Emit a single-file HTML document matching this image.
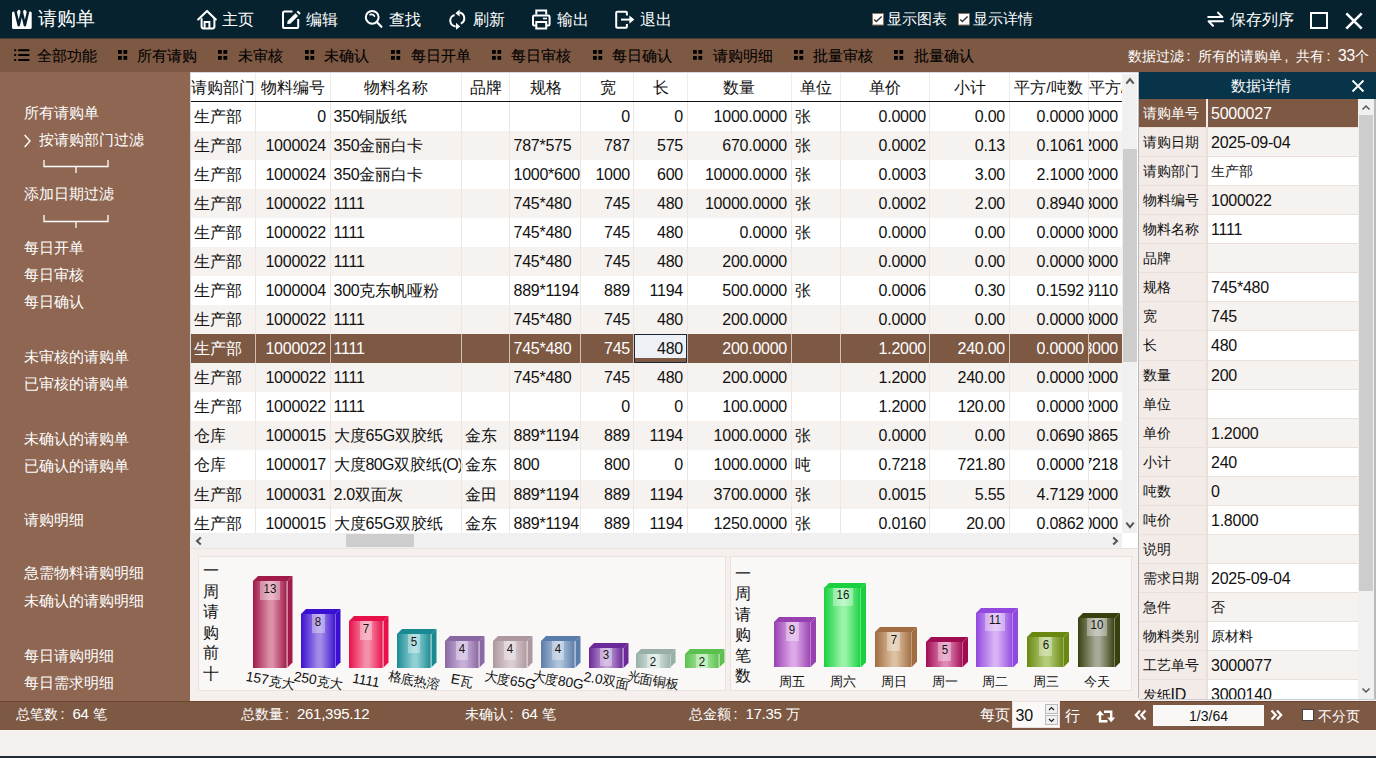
<!DOCTYPE html><html><head><meta charset="utf-8"><style>
*{box-sizing:border-box;margin:0;padding:0}
html,body{width:1376px;height:758px;overflow:hidden}
body{position:relative;background:#f5f1ee;font-family:"Liberation Sans",sans-serif;font-size:15px;color:#111}
.a{position:absolute}
.t{position:absolute;white-space:nowrap;line-height:1}
.n{font-size:16px;letter-spacing:-0.25px}
svg{position:absolute;overflow:visible}
.fc{display:inline-block;width:1em;padding-left:0.18em;font-size:1em}
</style></head><body>

<div class="a" style="left:0;top:0;width:1376px;height:38px;background:#05222e"></div>
<svg style="left:11px;top:8px" width="22" height="22" viewBox="0 0 22 22">
<rect x="1" y="3.6" width="19.7" height="17.4" rx="1.5" fill="#fff"/>
<path d="M6.6 2.8 Q7.9 0.9 9.2 2.8 L9 5 L6.8 5 Z" fill="#fff"/>
<path d="M12.4 2.8 Q13.7 0.9 15 2.8 L14.8 5 L12.6 5 Z" fill="#fff"/>
<path d="M4.3 2.6 L7.7 17.2 L10.8 4 L13.9 17.2 L17.3 2.6" fill="none" stroke="#05222e" stroke-width="2.5" stroke-linejoin="round"/>
</svg>
<div class="t" style="left:38px;top:10px;font-size:18.5px;color:#fff">请购单</div>
<svg style="left:196px;top:8px" width="22" height="22" viewBox="0 0 22 22">
<path d="M2.2 11.4 L11 2.9 L19.8 11.4" fill="none" stroke="#fff" stroke-width="2.1" stroke-linecap="round" stroke-linejoin="round"/>
<path d="M5.6 10.2 V18.6 Q5.6 20.4 7.4 20.4 H16.6 Q18.4 20.4 18.4 18.6 V10.2" fill="none" stroke="#fff" stroke-width="2"/>
<path d="M8.6 20 V13.9 H13.4 V20" fill="none" stroke="#fff" stroke-width="2"/>
</svg>
<div class="t" style="left:222px;top:11.5px;font-size:16px;color:#fff">主页</div>
<svg style="left:281px;top:9px" width="22" height="22" viewBox="0 0 22 22">
<path d="M11.5 2.4 H3.6 Q2 2.4 2 4 V17.4 Q2 19 3.6 19 H15.6 Q17.2 19 17.2 17.4 V10" fill="none" stroke="#fff" stroke-width="2"/>
<path d="M6.2 15.1 L6.6 12 L14.4 4.2 L17.1 6.9 L9.3 14.7 Z" fill="#fff"/>
<path d="M15.5 3.1 L16.6 2 Q17.1 1.6 17.6 2 L19.3 3.7 Q19.7 4.2 19.3 4.7 L18.2 5.8 Z" fill="#fff"/>
</svg>
<div class="t" style="left:305.5px;top:11.5px;font-size:16px;color:#fff">编辑</div>
<svg style="left:363px;top:8px" width="22" height="22" viewBox="0 0 22 22">
<circle cx="9.2" cy="9.3" r="6.4" fill="none" stroke="#fff" stroke-width="2"/>
<path d="M14 14.2 L18.4 18.8" stroke="#fff" stroke-width="2.2" stroke-linecap="round"/>
<path d="M7.2 6.6 Q10 5.6 11.4 8.2" fill="none" stroke="#fff" stroke-width="1.7" stroke-linecap="round"/>
</svg>
<div class="t" style="left:389px;top:11.5px;font-size:16px;color:#fff">查找</div>
<svg style="left:447px;top:8px" width="22" height="22" viewBox="0 0 22 22">
<path d="M12.6 4.6 A5.8 5.8 0 0 1 13.8 15.6" fill="none" stroke="#fff" stroke-width="2"/>
<path d="M8.6 18.4 A5.8 5.8 0 0 1 7.6 7" fill="none" stroke="#fff" stroke-width="2"/>
<path d="M12.6 1.6 L12.6 8.6 L8.4 5.2 Z" fill="#fff"/>
<path d="M9 14.8 L9 21.8 L13.2 18.4 Z" fill="#fff"/>
</svg>
<div class="t" style="left:473px;top:11.5px;font-size:16px;color:#fff">刷新</div>
<svg style="left:530px;top:8px" width="22" height="22" viewBox="0 0 22 22">
<path d="M6.3 6.6 V2.5 H16.2 V6.6" fill="none" stroke="#fff" stroke-width="2"/>
<path d="M6 17.4 H4.2 Q3 17.4 3 16.2 V9 Q3 7.6 4.4 7.6 H18.2 Q19.6 7.6 19.6 9 V16.2 Q19.6 17.4 18.4 17.4 H16.4" fill="none" stroke="#fff" stroke-width="2"/>
<path d="M6.3 13.9 H16.2 V20.6 H6.3 Z" fill="none" stroke="#fff" stroke-width="2"/>
<path d="M13 10.5 H17" stroke="#fff" stroke-width="1.6"/>
</svg>
<div class="t" style="left:557px;top:11.5px;font-size:16px;color:#fff">输出</div>
<svg style="left:613px;top:8px" width="22" height="22" viewBox="0 0 22 22">
<path d="M13.9 7.4 V4.8 Q13.9 3.8 12.9 3.8 H4.2 Q3.2 3.8 3.2 4.8 V18.8 Q3.2 19.8 4.2 19.8 H12.9 Q13.9 19.8 13.9 18.8 V16" fill="none" stroke="#fff" stroke-width="2"/>
<path d="M8 11.6 H17.5" stroke="#fff" stroke-width="2"/>
<path d="M16.4 7.4 L21.3 11.6 L16.4 15.8 Z" fill="#fff"/>
</svg>
<div class="t" style="left:640px;top:11.5px;font-size:16px;color:#fff">退出</div>
<svg style="left:872px;top:12.5px" width="12" height="12" viewBox="0 0 12 12"><rect x="0.5" y="0.5" width="11" height="11.5" fill="#fff" stroke="#8a7060" stroke-width="1"/><path d="M2.2 6.4 L4.4 8.6 L9.6 3.4" fill="none" stroke="#333" stroke-width="1.4"/></svg>
<div class="t" style="left:887px;top:12px;font-size:14.6px;color:#fff">显示图表</div>
<svg style="left:958px;top:12.5px" width="12" height="12" viewBox="0 0 12 12"><rect x="0.5" y="0.5" width="11" height="11.5" fill="#fff" stroke="#8a7060" stroke-width="1"/><path d="M2.2 6.4 L4.4 8.6 L9.6 3.4" fill="none" stroke="#333" stroke-width="1.4"/></svg>
<div class="t" style="left:972.5px;top:12px;font-size:14.6px;color:#fff">显示详情</div>
<svg style="left:1206px;top:10px" width="20" height="20" viewBox="0 0 20 20">
<path d="M2.2 7.1 H16.4 L12 2.6" fill="none" stroke="#fff" stroke-width="2" stroke-linecap="round" stroke-linejoin="round"/>
<path d="M17 11.3 H2.6 L7 15.8" fill="none" stroke="#fff" stroke-width="2" stroke-linecap="round" stroke-linejoin="round"/>
</svg>
<div class="t" style="left:1230px;top:12px;font-size:15.6px;color:#fff">保存列序</div>
<div class="a" style="left:1310px;top:12px;width:18px;height:17px;border:2px solid #fff"></div>
<svg style="left:1344px;top:11px" width="20" height="20" viewBox="0 0 20 20">
<path d="M2.3 2.3 L17.7 17.7 M17.7 2.3 L2.3 17.7" stroke="#fff" stroke-width="2.6"/></svg>
<div class="a" style="left:0;top:38px;width:1376px;height:34px;background:#7d5944"></div>
<div class="a" style="left:0;top:38px;width:1376px;height:1px;background:#4a3c34"></div>
<svg style="left:13px;top:48px" width="18" height="14" viewBox="0 0 18 14">
<rect x="1.2" y="1.2" width="2" height="2" fill="#000"/><rect x="5.2" y="1.2" width="11.2" height="2" fill="#000"/>
<rect x="1.2" y="6" width="2" height="2" fill="#000"/><rect x="5.2" y="6" width="11.2" height="2" fill="#000"/>
<rect x="1.2" y="11" width="2" height="2" fill="#000"/><rect x="5.2" y="11" width="11.2" height="2" fill="#000"/>
</svg>
<div class="t" style="left:36.5px;top:47.8px;font-size:15.3px;color:#000;-webkit-text-stroke:0.1px #000">全部功能</div>
<svg style="left:118px;top:50px" width="10" height="10" viewBox="0 0 10 10"><rect x="0" y="0" width="3.8" height="3.8" fill="#000"/><rect x="5.4" y="0" width="3.8" height="3.8" fill="#000"/><rect x="0" y="6" width="3.8" height="3.8" fill="#000"/><rect x="5.4" y="6" width="3.8" height="3.8" fill="#000"/></svg>
<div class="t" style="left:136.5px;top:47.8px;font-size:15.3px;color:#000;-webkit-text-stroke:0.1px #000">所有请购</div>
<svg style="left:218px;top:50px" width="10" height="10" viewBox="0 0 10 10"><rect x="0" y="0" width="3.8" height="3.8" fill="#000"/><rect x="5.4" y="0" width="3.8" height="3.8" fill="#000"/><rect x="0" y="6" width="3.8" height="3.8" fill="#000"/><rect x="5.4" y="6" width="3.8" height="3.8" fill="#000"/></svg>
<div class="t" style="left:237.5px;top:47.8px;font-size:15.3px;color:#000;-webkit-text-stroke:0.1px #000">未审核</div>
<svg style="left:305px;top:50px" width="10" height="10" viewBox="0 0 10 10"><rect x="0" y="0" width="3.8" height="3.8" fill="#000"/><rect x="5.4" y="0" width="3.8" height="3.8" fill="#000"/><rect x="0" y="6" width="3.8" height="3.8" fill="#000"/><rect x="5.4" y="6" width="3.8" height="3.8" fill="#000"/></svg>
<div class="t" style="left:324px;top:47.8px;font-size:15.3px;color:#000;-webkit-text-stroke:0.1px #000">未确认</div>
<svg style="left:391px;top:50px" width="10" height="10" viewBox="0 0 10 10"><rect x="0" y="0" width="3.8" height="3.8" fill="#000"/><rect x="5.4" y="0" width="3.8" height="3.8" fill="#000"/><rect x="0" y="6" width="3.8" height="3.8" fill="#000"/><rect x="5.4" y="6" width="3.8" height="3.8" fill="#000"/></svg>
<div class="t" style="left:410.5px;top:47.8px;font-size:15.3px;color:#000;-webkit-text-stroke:0.1px #000">每日开单</div>
<svg style="left:491.5px;top:50px" width="10" height="10" viewBox="0 0 10 10"><rect x="0" y="0" width="3.8" height="3.8" fill="#000"/><rect x="5.4" y="0" width="3.8" height="3.8" fill="#000"/><rect x="0" y="6" width="3.8" height="3.8" fill="#000"/><rect x="5.4" y="6" width="3.8" height="3.8" fill="#000"/></svg>
<div class="t" style="left:510.5px;top:47.8px;font-size:15.3px;color:#000;-webkit-text-stroke:0.1px #000">每日审核</div>
<svg style="left:592.5px;top:50px" width="10" height="10" viewBox="0 0 10 10"><rect x="0" y="0" width="3.8" height="3.8" fill="#000"/><rect x="5.4" y="0" width="3.8" height="3.8" fill="#000"/><rect x="0" y="6" width="3.8" height="3.8" fill="#000"/><rect x="5.4" y="6" width="3.8" height="3.8" fill="#000"/></svg>
<div class="t" style="left:611.5px;top:47.8px;font-size:15.3px;color:#000;-webkit-text-stroke:0.1px #000">每日确认</div>
<svg style="left:693px;top:50px" width="10" height="10" viewBox="0 0 10 10"><rect x="0" y="0" width="3.8" height="3.8" fill="#000"/><rect x="5.4" y="0" width="3.8" height="3.8" fill="#000"/><rect x="0" y="6" width="3.8" height="3.8" fill="#000"/><rect x="5.4" y="6" width="3.8" height="3.8" fill="#000"/></svg>
<div class="t" style="left:713px;top:47.8px;font-size:15.3px;color:#000;-webkit-text-stroke:0.1px #000">请购明细</div>
<svg style="left:794px;top:50px" width="10" height="10" viewBox="0 0 10 10"><rect x="0" y="0" width="3.8" height="3.8" fill="#000"/><rect x="5.4" y="0" width="3.8" height="3.8" fill="#000"/><rect x="0" y="6" width="3.8" height="3.8" fill="#000"/><rect x="5.4" y="6" width="3.8" height="3.8" fill="#000"/></svg>
<div class="t" style="left:813px;top:47.8px;font-size:15.3px;color:#000;-webkit-text-stroke:0.1px #000">批量审核</div>
<svg style="left:894px;top:50px" width="10" height="10" viewBox="0 0 10 10"><rect x="0" y="0" width="3.8" height="3.8" fill="#000"/><rect x="5.4" y="0" width="3.8" height="3.8" fill="#000"/><rect x="0" y="6" width="3.8" height="3.8" fill="#000"/><rect x="5.4" y="6" width="3.8" height="3.8" fill="#000"/></svg>
<div class="t" style="left:913.5px;top:47.8px;font-size:15.3px;color:#000;-webkit-text-stroke:0.1px #000">批量确认</div>
<div class="t" style="left:1128px;top:47.5px;font-size:14px;color:#fff">数据过滤<span class="fc">:</span>所有的请购单<span class="fc">,</span>共有<span class="fc">:</span><span class="n" style="font-size:15.6px">33</span>个</div>
<div class="a" style="left:0;top:72px;width:190px;height:629px;background:#8e6651"></div>
<div class="t" style="left:24px;top:105px;font-size:15.2px;color:#fff">所有请购单</div>
<div class="t" style="left:24px;top:132px;font-size:15.2px;color:#fff"><span style="display:inline-block;width:15px"></span>按请购部门过滤</div>
<div class="t" style="left:24px;top:186px;font-size:15.2px;color:#fff">添加日期过滤</div>
<div class="t" style="left:24px;top:240px;font-size:15.2px;color:#fff">每日开单</div>
<div class="t" style="left:24px;top:267px;font-size:15.2px;color:#fff">每日审核</div>
<div class="t" style="left:24px;top:294px;font-size:15.2px;color:#fff">每日确认</div>
<div class="t" style="left:24px;top:349px;font-size:15.2px;color:#fff">未审核的请购单</div>
<div class="t" style="left:24px;top:376px;font-size:15.2px;color:#fff">已审核的请购单</div>
<div class="t" style="left:24px;top:430.5px;font-size:15.2px;color:#fff">未确认的请购单</div>
<div class="t" style="left:24px;top:458px;font-size:15.2px;color:#fff">已确认的请购单</div>
<div class="t" style="left:24px;top:511.70000000000005px;font-size:15.2px;color:#fff">请购明细</div>
<div class="t" style="left:24px;top:565.3px;font-size:15.2px;color:#fff">急需物料请购明细</div>
<div class="t" style="left:24px;top:593px;font-size:15.2px;color:#fff">未确认的请购明细</div>
<div class="t" style="left:24px;top:647.7px;font-size:15.2px;color:#fff">每日请购明细</div>
<div class="t" style="left:24px;top:675px;font-size:15.2px;color:#fff">每日需求明细</div>
<svg style="left:43px;top:159.5px" width="66" height="14" viewBox="0 0 66 14"><path d="M1 0 V6.5 H65 V0 M33 6.5 V13" fill="none" stroke="#fff" stroke-width="1.3"/></svg>
<svg style="left:43px;top:215px" width="66" height="14" viewBox="0 0 66 14"><path d="M1 0 V6.5 H65 V0 M33 6.5 V13" fill="none" stroke="#fff" stroke-width="1.3"/></svg>
<svg style="left:23px;top:134px" width="9" height="14" viewBox="0 0 9 14"><path d="M1.6 1 L7 7 L1.6 13" fill="none" stroke="#fff" stroke-width="1.4"/></svg>
<div class="a" style="left:190px;top:72px;width:932px;height:461px;background:#fff;overflow:hidden">
<div class="a" style="left:0px;top:0;width:65px;height:29px;overflow:hidden"><div class="t" style="left:0;right:0;top:8.4px;text-align:center;font-size:15.5px">请购部门</div></div>
<div class="a" style="left:65px;top:0;width:75px;height:29px;overflow:hidden"><div class="t" style="left:0;right:0;top:8.4px;text-align:center;font-size:15.5px">物料编号</div></div>
<div class="a" style="left:65px;top:0;width:1px;height:29px;background:#ededed"></div>
<div class="a" style="left:140px;top:0;width:131px;height:29px;overflow:hidden"><div class="t" style="left:0;right:0;top:8.4px;text-align:center;font-size:15.5px">物料名称</div></div>
<div class="a" style="left:140px;top:0;width:1px;height:29px;background:#ededed"></div>
<div class="a" style="left:271px;top:0;width:49px;height:29px;overflow:hidden"><div class="t" style="left:0;right:0;top:8.4px;text-align:center;font-size:15.5px">品牌</div></div>
<div class="a" style="left:271px;top:0;width:1px;height:29px;background:#ededed"></div>
<div class="a" style="left:320px;top:0;width:71px;height:29px;overflow:hidden"><div class="t" style="left:0;right:0;top:8.4px;text-align:center;font-size:15.5px">规格</div></div>
<div class="a" style="left:319px;top:0;width:1px;height:29px;background:#ededed"></div>
<div class="a" style="left:391px;top:0;width:53px;height:29px;overflow:hidden"><div class="t" style="left:0;right:0;top:8.4px;text-align:center;font-size:15.5px">宽</div></div>
<div class="a" style="left:390px;top:0;width:1px;height:29px;background:#ededed"></div>
<div class="a" style="left:444px;top:0;width:53px;height:29px;overflow:hidden"><div class="t" style="left:0;right:0;top:8.4px;text-align:center;font-size:15.5px">长</div></div>
<div class="a" style="left:443px;top:0;width:1px;height:29px;background:#ededed"></div>
<div class="a" style="left:497px;top:0;width:104px;height:29px;overflow:hidden"><div class="t" style="left:0;right:0;top:8.4px;text-align:center;font-size:15.5px">数量</div></div>
<div class="a" style="left:497px;top:0;width:1px;height:29px;background:#ededed"></div>
<div class="a" style="left:601px;top:0;width:49px;height:29px;overflow:hidden"><div class="t" style="left:0;right:0;top:8.4px;text-align:center;font-size:15.5px">单位</div></div>
<div class="a" style="left:601px;top:0;width:1px;height:29px;background:#ededed"></div>
<div class="a" style="left:650px;top:0;width:90px;height:29px;overflow:hidden"><div class="t" style="left:0;right:0;top:8.4px;text-align:center;font-size:15.5px">单价</div></div>
<div class="a" style="left:650px;top:0;width:1px;height:29px;background:#ededed"></div>
<div class="a" style="left:740px;top:0;width:79px;height:29px;overflow:hidden"><div class="t" style="left:0;right:0;top:8.4px;text-align:center;font-size:15.5px">小计</div></div>
<div class="a" style="left:739px;top:0;width:1px;height:29px;background:#ededed"></div>
<div class="a" style="left:819px;top:0;width:79px;height:29px;overflow:hidden"><div class="t" style="left:0;right:0;top:8.4px;text-align:center;font-size:15.5px">平方/吨数</div></div>
<div class="a" style="left:819px;top:0;width:1px;height:29px;background:#ededed"></div>
<div class="a" style="left:898px;top:0;width:34px;height:29px;overflow:hidden"><div class="t" style="left:1px;top:8.4px;font-size:15.5px">平方/吨价</div></div>
<div class="a" style="left:898px;top:0;width:1px;height:29px;background:#ededed"></div>
<div class="a" style="left:0;top:0;width:1px;height:461px;background:#d6dbe3"></div>
<div class="a" style="left:1px;top:29px;width:931px;height:1px;background:#111"></div>
<div class="a" style="left:1px;top:30px;width:931px;height:30px;background:#fff"></div>
<div class="t" style="left:3.5px;top:37.2px;font-size:15.5px;color:#111">生产部</div>
<div class="a" style="left:65px;top:30px;width:1px;height:30px;background:#efe6e1"></div>
<div class="a" style="left:66px;top:30px;width:74px;height:29px;overflow:hidden"><div class="t" style="right:4px;top:7.2px;font-size:15.5px;color:#111"><span class="n">0</span></div></div>
<div class="a" style="left:140px;top:30px;width:1px;height:30px;background:#efe6e1"></div>
<div class="t" style="left:143.5px;top:37.2px;font-size:15.5px;color:#111"><span class="n">350</span>铜版纸</div>
<div class="a" style="left:271px;top:30px;width:1px;height:30px;background:#efe6e1"></div>
<div class="a" style="left:319px;top:30px;width:1px;height:30px;background:#efe6e1"></div>
<div class="a" style="left:390px;top:30px;width:1px;height:30px;background:#efe6e1"></div>
<div class="a" style="left:392px;top:30px;width:52px;height:29px;overflow:hidden"><div class="t" style="right:4px;top:7.2px;font-size:15.5px;color:#111"><span class="n">0</span></div></div>
<div class="a" style="left:443px;top:30px;width:1px;height:30px;background:#efe6e1"></div>
<div class="a" style="left:445px;top:30px;width:52px;height:29px;overflow:hidden"><div class="t" style="right:4px;top:7.2px;font-size:15.5px;color:#111"><span class="n">0</span></div></div>
<div class="a" style="left:497px;top:30px;width:1px;height:30px;background:#efe6e1"></div>
<div class="a" style="left:498px;top:30px;width:103px;height:29px;overflow:hidden"><div class="t" style="right:4px;top:7.2px;font-size:15.5px;color:#111"><span class="n">1000.0000</span></div></div>
<div class="a" style="left:601px;top:30px;width:1px;height:30px;background:#efe6e1"></div>
<div class="t" style="left:604.5px;top:37.2px;font-size:15.5px;color:#111">张</div>
<div class="a" style="left:650px;top:30px;width:1px;height:30px;background:#efe6e1"></div>
<div class="a" style="left:651px;top:30px;width:89px;height:29px;overflow:hidden"><div class="t" style="right:4px;top:7.2px;font-size:15.5px;color:#111"><span class="n">0.0000</span></div></div>
<div class="a" style="left:739px;top:30px;width:1px;height:30px;background:#efe6e1"></div>
<div class="a" style="left:741px;top:30px;width:78px;height:29px;overflow:hidden"><div class="t" style="right:4px;top:7.2px;font-size:15.5px;color:#111"><span class="n">0.00</span></div></div>
<div class="a" style="left:819px;top:30px;width:1px;height:30px;background:#efe6e1"></div>
<div class="a" style="left:820px;top:30px;width:78px;height:29px;overflow:hidden"><div class="t" style="right:4px;top:7.2px;font-size:15.5px;color:#111"><span class="n">0.0000</span></div></div>
<div class="a" style="left:898px;top:30px;width:1px;height:30px;background:#efe6e1"></div>
<div class="a" style="left:899px;top:30px;width:33px;height:29px;overflow:hidden"><div class="t" style="right:4px;top:7.2px;font-size:15.5px;color:#111"><span class="n">0.0000</span></div></div>
<div class="a" style="left:1px;top:59px;width:931px;height:30px;background:#f6f2ef"></div>
<div class="t" style="left:3.5px;top:66.2px;font-size:15.5px;color:#111">生产部</div>
<div class="a" style="left:65px;top:59px;width:1px;height:30px;background:#efe6e1"></div>
<div class="a" style="left:66px;top:59px;width:74px;height:29px;overflow:hidden"><div class="t" style="right:4px;top:7.2px;font-size:15.5px;color:#111"><span class="n">1000024</span></div></div>
<div class="a" style="left:140px;top:59px;width:1px;height:30px;background:#efe6e1"></div>
<div class="t" style="left:143.5px;top:66.2px;font-size:15.5px;color:#111"><span class="n">350</span>金丽白卡</div>
<div class="a" style="left:271px;top:59px;width:1px;height:30px;background:#efe6e1"></div>
<div class="a" style="left:319px;top:59px;width:1px;height:30px;background:#efe6e1"></div>
<div class="t" style="left:323.5px;top:66.2px;font-size:15.5px;color:#111"><span class="n">787*575</span></div>
<div class="a" style="left:390px;top:59px;width:1px;height:30px;background:#efe6e1"></div>
<div class="a" style="left:392px;top:59px;width:52px;height:29px;overflow:hidden"><div class="t" style="right:4px;top:7.2px;font-size:15.5px;color:#111"><span class="n">787</span></div></div>
<div class="a" style="left:443px;top:59px;width:1px;height:30px;background:#efe6e1"></div>
<div class="a" style="left:445px;top:59px;width:52px;height:29px;overflow:hidden"><div class="t" style="right:4px;top:7.2px;font-size:15.5px;color:#111"><span class="n">575</span></div></div>
<div class="a" style="left:497px;top:59px;width:1px;height:30px;background:#efe6e1"></div>
<div class="a" style="left:498px;top:59px;width:103px;height:29px;overflow:hidden"><div class="t" style="right:4px;top:7.2px;font-size:15.5px;color:#111"><span class="n">670.0000</span></div></div>
<div class="a" style="left:601px;top:59px;width:1px;height:30px;background:#efe6e1"></div>
<div class="t" style="left:604.5px;top:66.2px;font-size:15.5px;color:#111">张</div>
<div class="a" style="left:650px;top:59px;width:1px;height:30px;background:#efe6e1"></div>
<div class="a" style="left:651px;top:59px;width:89px;height:29px;overflow:hidden"><div class="t" style="right:4px;top:7.2px;font-size:15.5px;color:#111"><span class="n">0.0002</span></div></div>
<div class="a" style="left:739px;top:59px;width:1px;height:30px;background:#efe6e1"></div>
<div class="a" style="left:741px;top:59px;width:78px;height:29px;overflow:hidden"><div class="t" style="right:4px;top:7.2px;font-size:15.5px;color:#111"><span class="n">0.13</span></div></div>
<div class="a" style="left:819px;top:59px;width:1px;height:30px;background:#efe6e1"></div>
<div class="a" style="left:820px;top:59px;width:78px;height:29px;overflow:hidden"><div class="t" style="right:4px;top:7.2px;font-size:15.5px;color:#111"><span class="n">0.1061</span></div></div>
<div class="a" style="left:898px;top:59px;width:1px;height:30px;background:#efe6e1"></div>
<div class="a" style="left:899px;top:59px;width:33px;height:29px;overflow:hidden"><div class="t" style="right:4px;top:7.2px;font-size:15.5px;color:#111"><span class="n">0.2000</span></div></div>
<div class="a" style="left:1px;top:88px;width:931px;height:30px;background:#fff"></div>
<div class="t" style="left:3.5px;top:95.2px;font-size:15.5px;color:#111">生产部</div>
<div class="a" style="left:65px;top:88px;width:1px;height:30px;background:#efe6e1"></div>
<div class="a" style="left:66px;top:88px;width:74px;height:29px;overflow:hidden"><div class="t" style="right:4px;top:7.2px;font-size:15.5px;color:#111"><span class="n">1000024</span></div></div>
<div class="a" style="left:140px;top:88px;width:1px;height:30px;background:#efe6e1"></div>
<div class="t" style="left:143.5px;top:95.2px;font-size:15.5px;color:#111"><span class="n">350</span>金丽白卡</div>
<div class="a" style="left:271px;top:88px;width:1px;height:30px;background:#efe6e1"></div>
<div class="a" style="left:319px;top:88px;width:1px;height:30px;background:#efe6e1"></div>
<div class="t" style="left:323.5px;top:95.2px;font-size:15.5px;color:#111"><span class="n">1000*600</span></div>
<div class="a" style="left:390px;top:88px;width:1px;height:30px;background:#efe6e1"></div>
<div class="a" style="left:392px;top:88px;width:52px;height:29px;overflow:hidden"><div class="t" style="right:4px;top:7.2px;font-size:15.5px;color:#111"><span class="n">1000</span></div></div>
<div class="a" style="left:443px;top:88px;width:1px;height:30px;background:#efe6e1"></div>
<div class="a" style="left:445px;top:88px;width:52px;height:29px;overflow:hidden"><div class="t" style="right:4px;top:7.2px;font-size:15.5px;color:#111"><span class="n">600</span></div></div>
<div class="a" style="left:497px;top:88px;width:1px;height:30px;background:#efe6e1"></div>
<div class="a" style="left:498px;top:88px;width:103px;height:29px;overflow:hidden"><div class="t" style="right:4px;top:7.2px;font-size:15.5px;color:#111"><span class="n">10000.0000</span></div></div>
<div class="a" style="left:601px;top:88px;width:1px;height:30px;background:#efe6e1"></div>
<div class="t" style="left:604.5px;top:95.2px;font-size:15.5px;color:#111">张</div>
<div class="a" style="left:650px;top:88px;width:1px;height:30px;background:#efe6e1"></div>
<div class="a" style="left:651px;top:88px;width:89px;height:29px;overflow:hidden"><div class="t" style="right:4px;top:7.2px;font-size:15.5px;color:#111"><span class="n">0.0003</span></div></div>
<div class="a" style="left:739px;top:88px;width:1px;height:30px;background:#efe6e1"></div>
<div class="a" style="left:741px;top:88px;width:78px;height:29px;overflow:hidden"><div class="t" style="right:4px;top:7.2px;font-size:15.5px;color:#111"><span class="n">3.00</span></div></div>
<div class="a" style="left:819px;top:88px;width:1px;height:30px;background:#efe6e1"></div>
<div class="a" style="left:820px;top:88px;width:78px;height:29px;overflow:hidden"><div class="t" style="right:4px;top:7.2px;font-size:15.5px;color:#111"><span class="n">2.1000</span></div></div>
<div class="a" style="left:898px;top:88px;width:1px;height:30px;background:#efe6e1"></div>
<div class="a" style="left:899px;top:88px;width:33px;height:29px;overflow:hidden"><div class="t" style="right:4px;top:7.2px;font-size:15.5px;color:#111"><span class="n">0.2000</span></div></div>
<div class="a" style="left:1px;top:117px;width:931px;height:30px;background:#f6f2ef"></div>
<div class="t" style="left:3.5px;top:124.2px;font-size:15.5px;color:#111">生产部</div>
<div class="a" style="left:65px;top:117px;width:1px;height:30px;background:#efe6e1"></div>
<div class="a" style="left:66px;top:117px;width:74px;height:29px;overflow:hidden"><div class="t" style="right:4px;top:7.2px;font-size:15.5px;color:#111"><span class="n">1000022</span></div></div>
<div class="a" style="left:140px;top:117px;width:1px;height:30px;background:#efe6e1"></div>
<div class="t" style="left:143.5px;top:124.2px;font-size:15.5px;color:#111"><span class="n">1111</span></div>
<div class="a" style="left:271px;top:117px;width:1px;height:30px;background:#efe6e1"></div>
<div class="a" style="left:319px;top:117px;width:1px;height:30px;background:#efe6e1"></div>
<div class="t" style="left:323.5px;top:124.2px;font-size:15.5px;color:#111"><span class="n">745*480</span></div>
<div class="a" style="left:390px;top:117px;width:1px;height:30px;background:#efe6e1"></div>
<div class="a" style="left:392px;top:117px;width:52px;height:29px;overflow:hidden"><div class="t" style="right:4px;top:7.2px;font-size:15.5px;color:#111"><span class="n">745</span></div></div>
<div class="a" style="left:443px;top:117px;width:1px;height:30px;background:#efe6e1"></div>
<div class="a" style="left:445px;top:117px;width:52px;height:29px;overflow:hidden"><div class="t" style="right:4px;top:7.2px;font-size:15.5px;color:#111"><span class="n">480</span></div></div>
<div class="a" style="left:497px;top:117px;width:1px;height:30px;background:#efe6e1"></div>
<div class="a" style="left:498px;top:117px;width:103px;height:29px;overflow:hidden"><div class="t" style="right:4px;top:7.2px;font-size:15.5px;color:#111"><span class="n">10000.0000</span></div></div>
<div class="a" style="left:601px;top:117px;width:1px;height:30px;background:#efe6e1"></div>
<div class="t" style="left:604.5px;top:124.2px;font-size:15.5px;color:#111">张</div>
<div class="a" style="left:650px;top:117px;width:1px;height:30px;background:#efe6e1"></div>
<div class="a" style="left:651px;top:117px;width:89px;height:29px;overflow:hidden"><div class="t" style="right:4px;top:7.2px;font-size:15.5px;color:#111"><span class="n">0.0002</span></div></div>
<div class="a" style="left:739px;top:117px;width:1px;height:30px;background:#efe6e1"></div>
<div class="a" style="left:741px;top:117px;width:78px;height:29px;overflow:hidden"><div class="t" style="right:4px;top:7.2px;font-size:15.5px;color:#111"><span class="n">2.00</span></div></div>
<div class="a" style="left:819px;top:117px;width:1px;height:30px;background:#efe6e1"></div>
<div class="a" style="left:820px;top:117px;width:78px;height:29px;overflow:hidden"><div class="t" style="right:4px;top:7.2px;font-size:15.5px;color:#111"><span class="n">0.8940</span></div></div>
<div class="a" style="left:898px;top:117px;width:1px;height:30px;background:#efe6e1"></div>
<div class="a" style="left:899px;top:117px;width:33px;height:29px;overflow:hidden"><div class="t" style="right:4px;top:7.2px;font-size:15.5px;color:#111"><span class="n">1.3000</span></div></div>
<div class="a" style="left:1px;top:146px;width:931px;height:30px;background:#fff"></div>
<div class="t" style="left:3.5px;top:153.2px;font-size:15.5px;color:#111">生产部</div>
<div class="a" style="left:65px;top:146px;width:1px;height:30px;background:#efe6e1"></div>
<div class="a" style="left:66px;top:146px;width:74px;height:29px;overflow:hidden"><div class="t" style="right:4px;top:7.2px;font-size:15.5px;color:#111"><span class="n">1000022</span></div></div>
<div class="a" style="left:140px;top:146px;width:1px;height:30px;background:#efe6e1"></div>
<div class="t" style="left:143.5px;top:153.2px;font-size:15.5px;color:#111"><span class="n">1111</span></div>
<div class="a" style="left:271px;top:146px;width:1px;height:30px;background:#efe6e1"></div>
<div class="a" style="left:319px;top:146px;width:1px;height:30px;background:#efe6e1"></div>
<div class="t" style="left:323.5px;top:153.2px;font-size:15.5px;color:#111"><span class="n">745*480</span></div>
<div class="a" style="left:390px;top:146px;width:1px;height:30px;background:#efe6e1"></div>
<div class="a" style="left:392px;top:146px;width:52px;height:29px;overflow:hidden"><div class="t" style="right:4px;top:7.2px;font-size:15.5px;color:#111"><span class="n">745</span></div></div>
<div class="a" style="left:443px;top:146px;width:1px;height:30px;background:#efe6e1"></div>
<div class="a" style="left:445px;top:146px;width:52px;height:29px;overflow:hidden"><div class="t" style="right:4px;top:7.2px;font-size:15.5px;color:#111"><span class="n">480</span></div></div>
<div class="a" style="left:497px;top:146px;width:1px;height:30px;background:#efe6e1"></div>
<div class="a" style="left:498px;top:146px;width:103px;height:29px;overflow:hidden"><div class="t" style="right:4px;top:7.2px;font-size:15.5px;color:#111"><span class="n">0.0000</span></div></div>
<div class="a" style="left:601px;top:146px;width:1px;height:30px;background:#efe6e1"></div>
<div class="t" style="left:604.5px;top:153.2px;font-size:15.5px;color:#111">张</div>
<div class="a" style="left:650px;top:146px;width:1px;height:30px;background:#efe6e1"></div>
<div class="a" style="left:651px;top:146px;width:89px;height:29px;overflow:hidden"><div class="t" style="right:4px;top:7.2px;font-size:15.5px;color:#111"><span class="n">0.0000</span></div></div>
<div class="a" style="left:739px;top:146px;width:1px;height:30px;background:#efe6e1"></div>
<div class="a" style="left:741px;top:146px;width:78px;height:29px;overflow:hidden"><div class="t" style="right:4px;top:7.2px;font-size:15.5px;color:#111"><span class="n">0.00</span></div></div>
<div class="a" style="left:819px;top:146px;width:1px;height:30px;background:#efe6e1"></div>
<div class="a" style="left:820px;top:146px;width:78px;height:29px;overflow:hidden"><div class="t" style="right:4px;top:7.2px;font-size:15.5px;color:#111"><span class="n">0.0000</span></div></div>
<div class="a" style="left:898px;top:146px;width:1px;height:30px;background:#efe6e1"></div>
<div class="a" style="left:899px;top:146px;width:33px;height:29px;overflow:hidden"><div class="t" style="right:4px;top:7.2px;font-size:15.5px;color:#111"><span class="n">1.3000</span></div></div>
<div class="a" style="left:1px;top:175px;width:931px;height:30px;background:#f6f2ef"></div>
<div class="t" style="left:3.5px;top:182.2px;font-size:15.5px;color:#111">生产部</div>
<div class="a" style="left:65px;top:175px;width:1px;height:30px;background:#efe6e1"></div>
<div class="a" style="left:66px;top:175px;width:74px;height:29px;overflow:hidden"><div class="t" style="right:4px;top:7.2px;font-size:15.5px;color:#111"><span class="n">1000022</span></div></div>
<div class="a" style="left:140px;top:175px;width:1px;height:30px;background:#efe6e1"></div>
<div class="t" style="left:143.5px;top:182.2px;font-size:15.5px;color:#111"><span class="n">1111</span></div>
<div class="a" style="left:271px;top:175px;width:1px;height:30px;background:#efe6e1"></div>
<div class="a" style="left:319px;top:175px;width:1px;height:30px;background:#efe6e1"></div>
<div class="t" style="left:323.5px;top:182.2px;font-size:15.5px;color:#111"><span class="n">745*480</span></div>
<div class="a" style="left:390px;top:175px;width:1px;height:30px;background:#efe6e1"></div>
<div class="a" style="left:392px;top:175px;width:52px;height:29px;overflow:hidden"><div class="t" style="right:4px;top:7.2px;font-size:15.5px;color:#111"><span class="n">745</span></div></div>
<div class="a" style="left:443px;top:175px;width:1px;height:30px;background:#efe6e1"></div>
<div class="a" style="left:445px;top:175px;width:52px;height:29px;overflow:hidden"><div class="t" style="right:4px;top:7.2px;font-size:15.5px;color:#111"><span class="n">480</span></div></div>
<div class="a" style="left:497px;top:175px;width:1px;height:30px;background:#efe6e1"></div>
<div class="a" style="left:498px;top:175px;width:103px;height:29px;overflow:hidden"><div class="t" style="right:4px;top:7.2px;font-size:15.5px;color:#111"><span class="n">200.0000</span></div></div>
<div class="a" style="left:601px;top:175px;width:1px;height:30px;background:#efe6e1"></div>
<div class="a" style="left:650px;top:175px;width:1px;height:30px;background:#efe6e1"></div>
<div class="a" style="left:651px;top:175px;width:89px;height:29px;overflow:hidden"><div class="t" style="right:4px;top:7.2px;font-size:15.5px;color:#111"><span class="n">0.0000</span></div></div>
<div class="a" style="left:739px;top:175px;width:1px;height:30px;background:#efe6e1"></div>
<div class="a" style="left:741px;top:175px;width:78px;height:29px;overflow:hidden"><div class="t" style="right:4px;top:7.2px;font-size:15.5px;color:#111"><span class="n">0.00</span></div></div>
<div class="a" style="left:819px;top:175px;width:1px;height:30px;background:#efe6e1"></div>
<div class="a" style="left:820px;top:175px;width:78px;height:29px;overflow:hidden"><div class="t" style="right:4px;top:7.2px;font-size:15.5px;color:#111"><span class="n">0.0000</span></div></div>
<div class="a" style="left:898px;top:175px;width:1px;height:30px;background:#efe6e1"></div>
<div class="a" style="left:899px;top:175px;width:33px;height:29px;overflow:hidden"><div class="t" style="right:4px;top:7.2px;font-size:15.5px;color:#111"><span class="n">1.3000</span></div></div>
<div class="a" style="left:1px;top:204px;width:931px;height:30px;background:#fff"></div>
<div class="t" style="left:3.5px;top:211.2px;font-size:15.5px;color:#111">生产部</div>
<div class="a" style="left:65px;top:204px;width:1px;height:30px;background:#efe6e1"></div>
<div class="a" style="left:66px;top:204px;width:74px;height:29px;overflow:hidden"><div class="t" style="right:4px;top:7.2px;font-size:15.5px;color:#111"><span class="n">1000004</span></div></div>
<div class="a" style="left:140px;top:204px;width:1px;height:30px;background:#efe6e1"></div>
<div class="t" style="left:143.5px;top:211.2px;font-size:15.5px;color:#111"><span class="n">300</span>克东帆哑粉</div>
<div class="a" style="left:271px;top:204px;width:1px;height:30px;background:#efe6e1"></div>
<div class="a" style="left:319px;top:204px;width:1px;height:30px;background:#efe6e1"></div>
<div class="t" style="left:323.5px;top:211.2px;font-size:15.5px;color:#111"><span class="n">889*1194</span></div>
<div class="a" style="left:390px;top:204px;width:1px;height:30px;background:#efe6e1"></div>
<div class="a" style="left:392px;top:204px;width:52px;height:29px;overflow:hidden"><div class="t" style="right:4px;top:7.2px;font-size:15.5px;color:#111"><span class="n">889</span></div></div>
<div class="a" style="left:443px;top:204px;width:1px;height:30px;background:#efe6e1"></div>
<div class="a" style="left:445px;top:204px;width:52px;height:29px;overflow:hidden"><div class="t" style="right:4px;top:7.2px;font-size:15.5px;color:#111"><span class="n">1194</span></div></div>
<div class="a" style="left:497px;top:204px;width:1px;height:30px;background:#efe6e1"></div>
<div class="a" style="left:498px;top:204px;width:103px;height:29px;overflow:hidden"><div class="t" style="right:4px;top:7.2px;font-size:15.5px;color:#111"><span class="n">500.0000</span></div></div>
<div class="a" style="left:601px;top:204px;width:1px;height:30px;background:#efe6e1"></div>
<div class="t" style="left:604.5px;top:211.2px;font-size:15.5px;color:#111">张</div>
<div class="a" style="left:650px;top:204px;width:1px;height:30px;background:#efe6e1"></div>
<div class="a" style="left:651px;top:204px;width:89px;height:29px;overflow:hidden"><div class="t" style="right:4px;top:7.2px;font-size:15.5px;color:#111"><span class="n">0.0006</span></div></div>
<div class="a" style="left:739px;top:204px;width:1px;height:30px;background:#efe6e1"></div>
<div class="a" style="left:741px;top:204px;width:78px;height:29px;overflow:hidden"><div class="t" style="right:4px;top:7.2px;font-size:15.5px;color:#111"><span class="n">0.30</span></div></div>
<div class="a" style="left:819px;top:204px;width:1px;height:30px;background:#efe6e1"></div>
<div class="a" style="left:820px;top:204px;width:78px;height:29px;overflow:hidden"><div class="t" style="right:4px;top:7.2px;font-size:15.5px;color:#111"><span class="n">0.1592</span></div></div>
<div class="a" style="left:898px;top:204px;width:1px;height:30px;background:#efe6e1"></div>
<div class="a" style="left:899px;top:204px;width:33px;height:29px;overflow:hidden"><div class="t" style="right:4px;top:7.2px;font-size:15.5px;color:#111"><span class="n">3.9110</span></div></div>
<div class="a" style="left:1px;top:233px;width:931px;height:30px;background:#f6f2ef"></div>
<div class="t" style="left:3.5px;top:240.2px;font-size:15.5px;color:#111">生产部</div>
<div class="a" style="left:65px;top:233px;width:1px;height:30px;background:#efe6e1"></div>
<div class="a" style="left:66px;top:233px;width:74px;height:29px;overflow:hidden"><div class="t" style="right:4px;top:7.2px;font-size:15.5px;color:#111"><span class="n">1000022</span></div></div>
<div class="a" style="left:140px;top:233px;width:1px;height:30px;background:#efe6e1"></div>
<div class="t" style="left:143.5px;top:240.2px;font-size:15.5px;color:#111"><span class="n">1111</span></div>
<div class="a" style="left:271px;top:233px;width:1px;height:30px;background:#efe6e1"></div>
<div class="a" style="left:319px;top:233px;width:1px;height:30px;background:#efe6e1"></div>
<div class="t" style="left:323.5px;top:240.2px;font-size:15.5px;color:#111"><span class="n">745*480</span></div>
<div class="a" style="left:390px;top:233px;width:1px;height:30px;background:#efe6e1"></div>
<div class="a" style="left:392px;top:233px;width:52px;height:29px;overflow:hidden"><div class="t" style="right:4px;top:7.2px;font-size:15.5px;color:#111"><span class="n">745</span></div></div>
<div class="a" style="left:443px;top:233px;width:1px;height:30px;background:#efe6e1"></div>
<div class="a" style="left:445px;top:233px;width:52px;height:29px;overflow:hidden"><div class="t" style="right:4px;top:7.2px;font-size:15.5px;color:#111"><span class="n">480</span></div></div>
<div class="a" style="left:497px;top:233px;width:1px;height:30px;background:#efe6e1"></div>
<div class="a" style="left:498px;top:233px;width:103px;height:29px;overflow:hidden"><div class="t" style="right:4px;top:7.2px;font-size:15.5px;color:#111"><span class="n">200.0000</span></div></div>
<div class="a" style="left:601px;top:233px;width:1px;height:30px;background:#efe6e1"></div>
<div class="a" style="left:650px;top:233px;width:1px;height:30px;background:#efe6e1"></div>
<div class="a" style="left:651px;top:233px;width:89px;height:29px;overflow:hidden"><div class="t" style="right:4px;top:7.2px;font-size:15.5px;color:#111"><span class="n">0.0000</span></div></div>
<div class="a" style="left:739px;top:233px;width:1px;height:30px;background:#efe6e1"></div>
<div class="a" style="left:741px;top:233px;width:78px;height:29px;overflow:hidden"><div class="t" style="right:4px;top:7.2px;font-size:15.5px;color:#111"><span class="n">0.00</span></div></div>
<div class="a" style="left:819px;top:233px;width:1px;height:30px;background:#efe6e1"></div>
<div class="a" style="left:820px;top:233px;width:78px;height:29px;overflow:hidden"><div class="t" style="right:4px;top:7.2px;font-size:15.5px;color:#111"><span class="n">0.0000</span></div></div>
<div class="a" style="left:898px;top:233px;width:1px;height:30px;background:#efe6e1"></div>
<div class="a" style="left:899px;top:233px;width:33px;height:29px;overflow:hidden"><div class="t" style="right:4px;top:7.2px;font-size:15.5px;color:#111"><span class="n">1.3000</span></div></div>
<div class="a" style="left:1px;top:262px;width:931px;height:30px;background:#7d5944"></div>
<div class="t" style="left:3.5px;top:269.2px;font-size:15.5px;color:#fff">生产部</div>
<div class="a" style="left:65px;top:262px;width:1px;height:30px;background:#d2beb2"></div>
<div class="a" style="left:66px;top:262px;width:74px;height:29px;overflow:hidden"><div class="t" style="right:4px;top:7.2px;font-size:15.5px;color:#fff"><span class="n">1000022</span></div></div>
<div class="a" style="left:140px;top:262px;width:1px;height:30px;background:#d2beb2"></div>
<div class="t" style="left:143.5px;top:269.2px;font-size:15.5px;color:#fff"><span class="n">1111</span></div>
<div class="a" style="left:271px;top:262px;width:1px;height:30px;background:#d2beb2"></div>
<div class="a" style="left:319px;top:262px;width:1px;height:30px;background:#d2beb2"></div>
<div class="t" style="left:323.5px;top:269.2px;font-size:15.5px;color:#fff"><span class="n">745*480</span></div>
<div class="a" style="left:390px;top:262px;width:1px;height:30px;background:#d2beb2"></div>
<div class="a" style="left:392px;top:262px;width:52px;height:29px;overflow:hidden"><div class="t" style="right:4px;top:7.2px;font-size:15.5px;color:#fff"><span class="n">745</span></div></div>
<div class="a" style="left:443px;top:262px;width:1px;height:30px;background:#d2beb2"></div>
<div class="a" style="left:444px;top:262px;width:53px;height:29px;border:1px solid #1c2833;background:linear-gradient(#edf1f6 0,#edf1f6 84%,#7d5944 84%)"></div>
<div class="a" style="left:445px;top:262px;width:52px;height:29px;overflow:hidden"><div class="t" style="right:4px;top:7.2px;font-size:15.5px;color:#111"><span class="n">480</span></div></div>
<div class="a" style="left:497px;top:262px;width:1px;height:30px;background:#d2beb2"></div>
<div class="a" style="left:498px;top:262px;width:103px;height:29px;overflow:hidden"><div class="t" style="right:4px;top:7.2px;font-size:15.5px;color:#fff"><span class="n">200.0000</span></div></div>
<div class="a" style="left:601px;top:262px;width:1px;height:30px;background:#d2beb2"></div>
<div class="a" style="left:650px;top:262px;width:1px;height:30px;background:#d2beb2"></div>
<div class="a" style="left:651px;top:262px;width:89px;height:29px;overflow:hidden"><div class="t" style="right:4px;top:7.2px;font-size:15.5px;color:#fff"><span class="n">1.2000</span></div></div>
<div class="a" style="left:739px;top:262px;width:1px;height:30px;background:#d2beb2"></div>
<div class="a" style="left:741px;top:262px;width:78px;height:29px;overflow:hidden"><div class="t" style="right:4px;top:7.2px;font-size:15.5px;color:#fff"><span class="n">240.00</span></div></div>
<div class="a" style="left:819px;top:262px;width:1px;height:30px;background:#d2beb2"></div>
<div class="a" style="left:820px;top:262px;width:78px;height:29px;overflow:hidden"><div class="t" style="right:4px;top:7.2px;font-size:15.5px;color:#fff"><span class="n">0.0000</span></div></div>
<div class="a" style="left:898px;top:262px;width:1px;height:30px;background:#d2beb2"></div>
<div class="a" style="left:899px;top:262px;width:33px;height:29px;overflow:hidden"><div class="t" style="right:4px;top:7.2px;font-size:15.5px;color:#fff"><span class="n">1.3000</span></div></div>
<div class="a" style="left:1px;top:291px;width:931px;height:30px;background:#f6f2ef"></div>
<div class="t" style="left:3.5px;top:298.2px;font-size:15.5px;color:#111">生产部</div>
<div class="a" style="left:65px;top:291px;width:1px;height:30px;background:#efe6e1"></div>
<div class="a" style="left:66px;top:291px;width:74px;height:29px;overflow:hidden"><div class="t" style="right:4px;top:7.2px;font-size:15.5px;color:#111"><span class="n">1000022</span></div></div>
<div class="a" style="left:140px;top:291px;width:1px;height:30px;background:#efe6e1"></div>
<div class="t" style="left:143.5px;top:298.2px;font-size:15.5px;color:#111"><span class="n">1111</span></div>
<div class="a" style="left:271px;top:291px;width:1px;height:30px;background:#efe6e1"></div>
<div class="a" style="left:319px;top:291px;width:1px;height:30px;background:#efe6e1"></div>
<div class="t" style="left:323.5px;top:298.2px;font-size:15.5px;color:#111"><span class="n">745*480</span></div>
<div class="a" style="left:390px;top:291px;width:1px;height:30px;background:#efe6e1"></div>
<div class="a" style="left:392px;top:291px;width:52px;height:29px;overflow:hidden"><div class="t" style="right:4px;top:7.2px;font-size:15.5px;color:#111"><span class="n">745</span></div></div>
<div class="a" style="left:443px;top:291px;width:1px;height:30px;background:#efe6e1"></div>
<div class="a" style="left:445px;top:291px;width:52px;height:29px;overflow:hidden"><div class="t" style="right:4px;top:7.2px;font-size:15.5px;color:#111"><span class="n">480</span></div></div>
<div class="a" style="left:497px;top:291px;width:1px;height:30px;background:#efe6e1"></div>
<div class="a" style="left:498px;top:291px;width:103px;height:29px;overflow:hidden"><div class="t" style="right:4px;top:7.2px;font-size:15.5px;color:#111"><span class="n">200.0000</span></div></div>
<div class="a" style="left:601px;top:291px;width:1px;height:30px;background:#efe6e1"></div>
<div class="a" style="left:650px;top:291px;width:1px;height:30px;background:#efe6e1"></div>
<div class="a" style="left:651px;top:291px;width:89px;height:29px;overflow:hidden"><div class="t" style="right:4px;top:7.2px;font-size:15.5px;color:#111"><span class="n">1.2000</span></div></div>
<div class="a" style="left:739px;top:291px;width:1px;height:30px;background:#efe6e1"></div>
<div class="a" style="left:741px;top:291px;width:78px;height:29px;overflow:hidden"><div class="t" style="right:4px;top:7.2px;font-size:15.5px;color:#111"><span class="n">240.00</span></div></div>
<div class="a" style="left:819px;top:291px;width:1px;height:30px;background:#efe6e1"></div>
<div class="a" style="left:820px;top:291px;width:78px;height:29px;overflow:hidden"><div class="t" style="right:4px;top:7.2px;font-size:15.5px;color:#111"><span class="n">0.0000</span></div></div>
<div class="a" style="left:898px;top:291px;width:1px;height:30px;background:#efe6e1"></div>
<div class="a" style="left:899px;top:291px;width:33px;height:29px;overflow:hidden"><div class="t" style="right:4px;top:7.2px;font-size:15.5px;color:#111"><span class="n">1.2000</span></div></div>
<div class="a" style="left:1px;top:320px;width:931px;height:30px;background:#fff"></div>
<div class="t" style="left:3.5px;top:327.2px;font-size:15.5px;color:#111">生产部</div>
<div class="a" style="left:65px;top:320px;width:1px;height:30px;background:#efe6e1"></div>
<div class="a" style="left:66px;top:320px;width:74px;height:29px;overflow:hidden"><div class="t" style="right:4px;top:7.2px;font-size:15.5px;color:#111"><span class="n">1000022</span></div></div>
<div class="a" style="left:140px;top:320px;width:1px;height:30px;background:#efe6e1"></div>
<div class="t" style="left:143.5px;top:327.2px;font-size:15.5px;color:#111"><span class="n">1111</span></div>
<div class="a" style="left:271px;top:320px;width:1px;height:30px;background:#efe6e1"></div>
<div class="a" style="left:319px;top:320px;width:1px;height:30px;background:#efe6e1"></div>
<div class="a" style="left:390px;top:320px;width:1px;height:30px;background:#efe6e1"></div>
<div class="a" style="left:392px;top:320px;width:52px;height:29px;overflow:hidden"><div class="t" style="right:4px;top:7.2px;font-size:15.5px;color:#111"><span class="n">0</span></div></div>
<div class="a" style="left:443px;top:320px;width:1px;height:30px;background:#efe6e1"></div>
<div class="a" style="left:445px;top:320px;width:52px;height:29px;overflow:hidden"><div class="t" style="right:4px;top:7.2px;font-size:15.5px;color:#111"><span class="n">0</span></div></div>
<div class="a" style="left:497px;top:320px;width:1px;height:30px;background:#efe6e1"></div>
<div class="a" style="left:498px;top:320px;width:103px;height:29px;overflow:hidden"><div class="t" style="right:4px;top:7.2px;font-size:15.5px;color:#111"><span class="n">100.0000</span></div></div>
<div class="a" style="left:601px;top:320px;width:1px;height:30px;background:#efe6e1"></div>
<div class="a" style="left:650px;top:320px;width:1px;height:30px;background:#efe6e1"></div>
<div class="a" style="left:651px;top:320px;width:89px;height:29px;overflow:hidden"><div class="t" style="right:4px;top:7.2px;font-size:15.5px;color:#111"><span class="n">1.2000</span></div></div>
<div class="a" style="left:739px;top:320px;width:1px;height:30px;background:#efe6e1"></div>
<div class="a" style="left:741px;top:320px;width:78px;height:29px;overflow:hidden"><div class="t" style="right:4px;top:7.2px;font-size:15.5px;color:#111"><span class="n">120.00</span></div></div>
<div class="a" style="left:819px;top:320px;width:1px;height:30px;background:#efe6e1"></div>
<div class="a" style="left:820px;top:320px;width:78px;height:29px;overflow:hidden"><div class="t" style="right:4px;top:7.2px;font-size:15.5px;color:#111"><span class="n">0.0000</span></div></div>
<div class="a" style="left:898px;top:320px;width:1px;height:30px;background:#efe6e1"></div>
<div class="a" style="left:899px;top:320px;width:33px;height:29px;overflow:hidden"><div class="t" style="right:4px;top:7.2px;font-size:15.5px;color:#111"><span class="n">1.2000</span></div></div>
<div class="a" style="left:1px;top:349px;width:931px;height:30px;background:#f6f2ef"></div>
<div class="t" style="left:3.5px;top:356.2px;font-size:15.5px;color:#111">仓库</div>
<div class="a" style="left:65px;top:349px;width:1px;height:30px;background:#efe6e1"></div>
<div class="a" style="left:66px;top:349px;width:74px;height:29px;overflow:hidden"><div class="t" style="right:4px;top:7.2px;font-size:15.5px;color:#111"><span class="n">1000015</span></div></div>
<div class="a" style="left:140px;top:349px;width:1px;height:30px;background:#efe6e1"></div>
<div class="t" style="left:143.5px;top:356.2px;font-size:15.5px;color:#111">大度<span class="n">65G</span>双胶纸</div>
<div class="a" style="left:271px;top:349px;width:1px;height:30px;background:#efe6e1"></div>
<div class="t" style="left:274.5px;top:356.2px;font-size:15.5px;color:#111">金东</div>
<div class="a" style="left:319px;top:349px;width:1px;height:30px;background:#efe6e1"></div>
<div class="t" style="left:323.5px;top:356.2px;font-size:15.5px;color:#111"><span class="n">889*1194</span></div>
<div class="a" style="left:390px;top:349px;width:1px;height:30px;background:#efe6e1"></div>
<div class="a" style="left:392px;top:349px;width:52px;height:29px;overflow:hidden"><div class="t" style="right:4px;top:7.2px;font-size:15.5px;color:#111"><span class="n">889</span></div></div>
<div class="a" style="left:443px;top:349px;width:1px;height:30px;background:#efe6e1"></div>
<div class="a" style="left:445px;top:349px;width:52px;height:29px;overflow:hidden"><div class="t" style="right:4px;top:7.2px;font-size:15.5px;color:#111"><span class="n">1194</span></div></div>
<div class="a" style="left:497px;top:349px;width:1px;height:30px;background:#efe6e1"></div>
<div class="a" style="left:498px;top:349px;width:103px;height:29px;overflow:hidden"><div class="t" style="right:4px;top:7.2px;font-size:15.5px;color:#111"><span class="n">1000.0000</span></div></div>
<div class="a" style="left:601px;top:349px;width:1px;height:30px;background:#efe6e1"></div>
<div class="t" style="left:604.5px;top:356.2px;font-size:15.5px;color:#111">张</div>
<div class="a" style="left:650px;top:349px;width:1px;height:30px;background:#efe6e1"></div>
<div class="a" style="left:651px;top:349px;width:89px;height:29px;overflow:hidden"><div class="t" style="right:4px;top:7.2px;font-size:15.5px;color:#111"><span class="n">0.0000</span></div></div>
<div class="a" style="left:739px;top:349px;width:1px;height:30px;background:#efe6e1"></div>
<div class="a" style="left:741px;top:349px;width:78px;height:29px;overflow:hidden"><div class="t" style="right:4px;top:7.2px;font-size:15.5px;color:#111"><span class="n">0.00</span></div></div>
<div class="a" style="left:819px;top:349px;width:1px;height:30px;background:#efe6e1"></div>
<div class="a" style="left:820px;top:349px;width:78px;height:29px;overflow:hidden"><div class="t" style="right:4px;top:7.2px;font-size:15.5px;color:#111"><span class="n">0.0690</span></div></div>
<div class="a" style="left:898px;top:349px;width:1px;height:30px;background:#efe6e1"></div>
<div class="a" style="left:899px;top:349px;width:33px;height:29px;overflow:hidden"><div class="t" style="right:4px;top:7.2px;font-size:15.5px;color:#111"><span class="n">0.6865</span></div></div>
<div class="a" style="left:1px;top:378px;width:931px;height:30px;background:#fff"></div>
<div class="t" style="left:3.5px;top:385.2px;font-size:15.5px;color:#111">仓库</div>
<div class="a" style="left:65px;top:378px;width:1px;height:30px;background:#efe6e1"></div>
<div class="a" style="left:66px;top:378px;width:74px;height:29px;overflow:hidden"><div class="t" style="right:4px;top:7.2px;font-size:15.5px;color:#111"><span class="n">1000017</span></div></div>
<div class="a" style="left:140px;top:378px;width:1px;height:30px;background:#efe6e1"></div>
<div class="t" style="left:143.5px;top:385.2px;font-size:15.5px;color:#111">大度<span class="n" style="letter-spacing:-0.6px">80G</span>双胶纸<span class="n" style="letter-spacing:-1px">(O)</span></div>
<div class="a" style="left:271px;top:378px;width:1px;height:30px;background:#efe6e1"></div>
<div class="t" style="left:274.5px;top:385.2px;font-size:15.5px;color:#111">金东</div>
<div class="a" style="left:319px;top:378px;width:1px;height:30px;background:#efe6e1"></div>
<div class="t" style="left:323.5px;top:385.2px;font-size:15.5px;color:#111"><span class="n">800</span></div>
<div class="a" style="left:390px;top:378px;width:1px;height:30px;background:#efe6e1"></div>
<div class="a" style="left:392px;top:378px;width:52px;height:29px;overflow:hidden"><div class="t" style="right:4px;top:7.2px;font-size:15.5px;color:#111"><span class="n">800</span></div></div>
<div class="a" style="left:443px;top:378px;width:1px;height:30px;background:#efe6e1"></div>
<div class="a" style="left:445px;top:378px;width:52px;height:29px;overflow:hidden"><div class="t" style="right:4px;top:7.2px;font-size:15.5px;color:#111"><span class="n">0</span></div></div>
<div class="a" style="left:497px;top:378px;width:1px;height:30px;background:#efe6e1"></div>
<div class="a" style="left:498px;top:378px;width:103px;height:29px;overflow:hidden"><div class="t" style="right:4px;top:7.2px;font-size:15.5px;color:#111"><span class="n">1000.0000</span></div></div>
<div class="a" style="left:601px;top:378px;width:1px;height:30px;background:#efe6e1"></div>
<div class="t" style="left:604.5px;top:385.2px;font-size:15.5px;color:#111">吨</div>
<div class="a" style="left:650px;top:378px;width:1px;height:30px;background:#efe6e1"></div>
<div class="a" style="left:651px;top:378px;width:89px;height:29px;overflow:hidden"><div class="t" style="right:4px;top:7.2px;font-size:15.5px;color:#111"><span class="n">0.7218</span></div></div>
<div class="a" style="left:739px;top:378px;width:1px;height:30px;background:#efe6e1"></div>
<div class="a" style="left:741px;top:378px;width:78px;height:29px;overflow:hidden"><div class="t" style="right:4px;top:7.2px;font-size:15.5px;color:#111"><span class="n">721.80</span></div></div>
<div class="a" style="left:819px;top:378px;width:1px;height:30px;background:#efe6e1"></div>
<div class="a" style="left:820px;top:378px;width:78px;height:29px;overflow:hidden"><div class="t" style="right:4px;top:7.2px;font-size:15.5px;color:#111"><span class="n">0.0000</span></div></div>
<div class="a" style="left:898px;top:378px;width:1px;height:30px;background:#efe6e1"></div>
<div class="a" style="left:899px;top:378px;width:33px;height:29px;overflow:hidden"><div class="t" style="right:4px;top:7.2px;font-size:15.5px;color:#111"><span class="n">0.7218</span></div></div>
<div class="a" style="left:1px;top:408px;width:931px;height:30px;background:#f6f2ef"></div>
<div class="t" style="left:3.5px;top:415.2px;font-size:15.5px;color:#111">生产部</div>
<div class="a" style="left:65px;top:408px;width:1px;height:30px;background:#efe6e1"></div>
<div class="a" style="left:66px;top:408px;width:74px;height:29px;overflow:hidden"><div class="t" style="right:4px;top:7.2px;font-size:15.5px;color:#111"><span class="n">1000031</span></div></div>
<div class="a" style="left:140px;top:408px;width:1px;height:30px;background:#efe6e1"></div>
<div class="t" style="left:143.5px;top:415.2px;font-size:15.5px;color:#111"><span class="n">2.0</span>双面灰</div>
<div class="a" style="left:271px;top:408px;width:1px;height:30px;background:#efe6e1"></div>
<div class="t" style="left:274.5px;top:415.2px;font-size:15.5px;color:#111">金田</div>
<div class="a" style="left:319px;top:408px;width:1px;height:30px;background:#efe6e1"></div>
<div class="t" style="left:323.5px;top:415.2px;font-size:15.5px;color:#111"><span class="n">889*1194</span></div>
<div class="a" style="left:390px;top:408px;width:1px;height:30px;background:#efe6e1"></div>
<div class="a" style="left:392px;top:408px;width:52px;height:29px;overflow:hidden"><div class="t" style="right:4px;top:7.2px;font-size:15.5px;color:#111"><span class="n">889</span></div></div>
<div class="a" style="left:443px;top:408px;width:1px;height:30px;background:#efe6e1"></div>
<div class="a" style="left:445px;top:408px;width:52px;height:29px;overflow:hidden"><div class="t" style="right:4px;top:7.2px;font-size:15.5px;color:#111"><span class="n">1194</span></div></div>
<div class="a" style="left:497px;top:408px;width:1px;height:30px;background:#efe6e1"></div>
<div class="a" style="left:498px;top:408px;width:103px;height:29px;overflow:hidden"><div class="t" style="right:4px;top:7.2px;font-size:15.5px;color:#111"><span class="n">3700.0000</span></div></div>
<div class="a" style="left:601px;top:408px;width:1px;height:30px;background:#efe6e1"></div>
<div class="t" style="left:604.5px;top:415.2px;font-size:15.5px;color:#111">张</div>
<div class="a" style="left:650px;top:408px;width:1px;height:30px;background:#efe6e1"></div>
<div class="a" style="left:651px;top:408px;width:89px;height:29px;overflow:hidden"><div class="t" style="right:4px;top:7.2px;font-size:15.5px;color:#111"><span class="n">0.0015</span></div></div>
<div class="a" style="left:739px;top:408px;width:1px;height:30px;background:#efe6e1"></div>
<div class="a" style="left:741px;top:408px;width:78px;height:29px;overflow:hidden"><div class="t" style="right:4px;top:7.2px;font-size:15.5px;color:#111"><span class="n">5.55</span></div></div>
<div class="a" style="left:819px;top:408px;width:1px;height:30px;background:#efe6e1"></div>
<div class="a" style="left:820px;top:408px;width:78px;height:29px;overflow:hidden"><div class="t" style="right:4px;top:7.2px;font-size:15.5px;color:#111"><span class="n">4.7129</span></div></div>
<div class="a" style="left:898px;top:408px;width:1px;height:30px;background:#efe6e1"></div>
<div class="a" style="left:899px;top:408px;width:33px;height:29px;overflow:hidden"><div class="t" style="right:4px;top:7.2px;font-size:15.5px;color:#111"><span class="n">0.2000</span></div></div>
<div class="a" style="left:1px;top:437px;width:931px;height:30px;background:#fff"></div>
<div class="t" style="left:3.5px;top:444.2px;font-size:15.5px;color:#111">生产部</div>
<div class="a" style="left:65px;top:437px;width:1px;height:30px;background:#efe6e1"></div>
<div class="a" style="left:66px;top:437px;width:74px;height:29px;overflow:hidden"><div class="t" style="right:4px;top:7.2px;font-size:15.5px;color:#111"><span class="n">1000015</span></div></div>
<div class="a" style="left:140px;top:437px;width:1px;height:30px;background:#efe6e1"></div>
<div class="t" style="left:143.5px;top:444.2px;font-size:15.5px;color:#111">大度<span class="n">65G</span>双胶纸</div>
<div class="a" style="left:271px;top:437px;width:1px;height:30px;background:#efe6e1"></div>
<div class="t" style="left:274.5px;top:444.2px;font-size:15.5px;color:#111">金东</div>
<div class="a" style="left:319px;top:437px;width:1px;height:30px;background:#efe6e1"></div>
<div class="t" style="left:323.5px;top:444.2px;font-size:15.5px;color:#111"><span class="n">889*1194</span></div>
<div class="a" style="left:390px;top:437px;width:1px;height:30px;background:#efe6e1"></div>
<div class="a" style="left:392px;top:437px;width:52px;height:29px;overflow:hidden"><div class="t" style="right:4px;top:7.2px;font-size:15.5px;color:#111"><span class="n">889</span></div></div>
<div class="a" style="left:443px;top:437px;width:1px;height:30px;background:#efe6e1"></div>
<div class="a" style="left:445px;top:437px;width:52px;height:29px;overflow:hidden"><div class="t" style="right:4px;top:7.2px;font-size:15.5px;color:#111"><span class="n">1194</span></div></div>
<div class="a" style="left:497px;top:437px;width:1px;height:30px;background:#efe6e1"></div>
<div class="a" style="left:498px;top:437px;width:103px;height:29px;overflow:hidden"><div class="t" style="right:4px;top:7.2px;font-size:15.5px;color:#111"><span class="n">1250.0000</span></div></div>
<div class="a" style="left:601px;top:437px;width:1px;height:30px;background:#efe6e1"></div>
<div class="t" style="left:604.5px;top:444.2px;font-size:15.5px;color:#111">张</div>
<div class="a" style="left:650px;top:437px;width:1px;height:30px;background:#efe6e1"></div>
<div class="a" style="left:651px;top:437px;width:89px;height:29px;overflow:hidden"><div class="t" style="right:4px;top:7.2px;font-size:15.5px;color:#111"><span class="n">0.0160</span></div></div>
<div class="a" style="left:739px;top:437px;width:1px;height:30px;background:#efe6e1"></div>
<div class="a" style="left:741px;top:437px;width:78px;height:29px;overflow:hidden"><div class="t" style="right:4px;top:7.2px;font-size:15.5px;color:#111"><span class="n">20.00</span></div></div>
<div class="a" style="left:819px;top:437px;width:1px;height:30px;background:#efe6e1"></div>
<div class="a" style="left:820px;top:437px;width:78px;height:29px;overflow:hidden"><div class="t" style="right:4px;top:7.2px;font-size:15.5px;color:#111"><span class="n">0.0862</span></div></div>
<div class="a" style="left:898px;top:437px;width:1px;height:30px;background:#efe6e1"></div>
<div class="a" style="left:899px;top:437px;width:33px;height:29px;overflow:hidden"><div class="t" style="right:4px;top:7.2px;font-size:15.5px;color:#111"><span class="n">0.0000</span></div></div>
</div>
<div class="a" style="left:1122px;top:72px;width:17px;height:2px;background:#fff"></div>
<div class="a" style="left:1122px;top:74px;width:15px;height:459px;background:#f0f0f0"></div>
<div class="a" style="left:1137px;top:72px;width:2px;height:460px;background:#fff"></div>
<div class="a" style="left:190px;top:72px;width:949px;height:1px;background:#d3d9e1"></div>
<div class="a" style="left:1123px;top:149px;width:14px;height:213px;background:#cdcdcd"></div>
<svg style="left:1125px;top:77px" width="10" height="8" viewBox="0 0 10 8"><path d="M1.3 6.6 L5 2 L8.7 6.6" fill="none" stroke="#555" stroke-width="2"/></svg>
<svg style="left:1124.5px;top:521px" width="10" height="8" viewBox="0 0 10 8"><path d="M1.3 1.6 L5 6.2 L8.7 1.6" fill="none" stroke="#555" stroke-width="2"/></svg>
<div class="a" style="left:190px;top:533px;width:932px;height:15px;background:#f0f0f0"></div>
<div class="a" style="left:346px;top:534px;width:68px;height:13px;background:#cdcdcd"></div>
<svg style="left:195px;top:536px" width="8" height="10" viewBox="0 0 8 10"><path d="M5.8 1.6 L2 5 L5.8 8.4" fill="none" stroke="#555" stroke-width="2"/></svg>
<svg style="left:1111px;top:536px" width="8" height="10" viewBox="0 0 8 10"><path d="M2.2 1.6 L6 5 L2.2 8.4" fill="none" stroke="#555" stroke-width="2"/></svg>
<div class="a" style="left:1122px;top:533px;width:16px;height:15px;background:#fff"></div>
<div class="a" style="left:1138px;top:72px;width:1px;height:626px;background:#b9b9b9"></div>
<div class="a" style="left:1139px;top:72px;width:237px;height:628px;background:#fff"></div>
<div class="a" style="left:1139px;top:72px;width:237px;height:27px;background:#08344a"></div>
<div class="t" style="left:1230.5px;top:78.2px;font-size:15.2px;color:#fff">数据详情</div>
<svg style="left:1351px;top:79px" width="14" height="14" viewBox="0 0 14 14"><path d="M1.5 1.5 L12.5 12.5 M12.5 1.5 L1.5 12.5" stroke="#fff" stroke-width="1.8"/></svg>
<div class="a" style="left:1139px;top:99px;width:219px;height:601px;overflow:hidden">
<div class="a" style="left:0;top:0;width:219px;height:28px;background:#7d5944"></div>
<div class="a" style="left:67px;top:0;width:2px;height:28px;background:#f3ece8"></div>
<div class="t" style="left:3.5px;top:7.0px;font-size:14px;color:#fff">请购单号</div>
<div class="t" style="left:72px;top:7.0px;font-size:14.2px;color:#fff"><span class="n">5000027</span></div>
<div class="a" style="left:0;top:28px;width:67px;height:30px;background:#f2ebe7;border-top:1px solid #eadfd9"></div>
<div class="a" style="left:69px;top:28px;width:150px;height:30px;background:#f6f2ef;border-top:1px solid #eadfd9"></div>
<div class="a" style="left:67px;top:28px;width:2px;height:30px;background:#eadfd9"></div>
<div class="t" style="left:3.5px;top:36.0px;font-size:14px;color:#111">请购日期</div>
<div class="t" style="left:72px;top:36.0px;font-size:14.2px;color:#111"><span class="n">2025-09-04</span></div>
<div class="a" style="left:0;top:57px;width:67px;height:30px;background:#f2ebe7;border-top:1px solid #eadfd9"></div>
<div class="a" style="left:69px;top:57px;width:150px;height:30px;background:#fff;border-top:1px solid #eadfd9"></div>
<div class="a" style="left:67px;top:57px;width:2px;height:30px;background:#eadfd9"></div>
<div class="t" style="left:3.5px;top:65.0px;font-size:14px;color:#111">请购部门</div>
<div class="t" style="left:72px;top:65.0px;font-size:14.2px;color:#111">生产部</div>
<div class="a" style="left:0;top:86px;width:67px;height:30px;background:#f2ebe7;border-top:1px solid #eadfd9"></div>
<div class="a" style="left:69px;top:86px;width:150px;height:30px;background:#f6f2ef;border-top:1px solid #eadfd9"></div>
<div class="a" style="left:67px;top:86px;width:2px;height:30px;background:#eadfd9"></div>
<div class="t" style="left:3.5px;top:94.0px;font-size:14px;color:#111">物料编号</div>
<div class="t" style="left:72px;top:94.0px;font-size:14.2px;color:#111"><span class="n">1000022</span></div>
<div class="a" style="left:0;top:115px;width:67px;height:30px;background:#f2ebe7;border-top:1px solid #eadfd9"></div>
<div class="a" style="left:69px;top:115px;width:150px;height:30px;background:#fff;border-top:1px solid #eadfd9"></div>
<div class="a" style="left:67px;top:115px;width:2px;height:30px;background:#eadfd9"></div>
<div class="t" style="left:3.5px;top:123.0px;font-size:14px;color:#111">物料名称</div>
<div class="t" style="left:72px;top:123.0px;font-size:14.2px;color:#111"><span class="n">1111</span></div>
<div class="a" style="left:0;top:144px;width:67px;height:30px;background:#f2ebe7;border-top:1px solid #eadfd9"></div>
<div class="a" style="left:69px;top:144px;width:150px;height:30px;background:#f6f2ef;border-top:1px solid #eadfd9"></div>
<div class="a" style="left:67px;top:144px;width:2px;height:30px;background:#eadfd9"></div>
<div class="t" style="left:3.5px;top:152.0px;font-size:14px;color:#111">品牌</div>
<div class="a" style="left:0;top:173px;width:67px;height:30px;background:#f2ebe7;border-top:1px solid #eadfd9"></div>
<div class="a" style="left:69px;top:173px;width:150px;height:30px;background:#fff;border-top:1px solid #eadfd9"></div>
<div class="a" style="left:67px;top:173px;width:2px;height:30px;background:#eadfd9"></div>
<div class="t" style="left:3.5px;top:181.0px;font-size:14px;color:#111">规格</div>
<div class="t" style="left:72px;top:181.0px;font-size:14.2px;color:#111"><span class="n">745*480</span></div>
<div class="a" style="left:0;top:202px;width:67px;height:30px;background:#f2ebe7;border-top:1px solid #eadfd9"></div>
<div class="a" style="left:69px;top:202px;width:150px;height:30px;background:#f6f2ef;border-top:1px solid #eadfd9"></div>
<div class="a" style="left:67px;top:202px;width:2px;height:30px;background:#eadfd9"></div>
<div class="t" style="left:3.5px;top:210.0px;font-size:14px;color:#111">宽</div>
<div class="t" style="left:72px;top:210.0px;font-size:14.2px;color:#111"><span class="n">745</span></div>
<div class="a" style="left:0;top:231px;width:67px;height:30px;background:#f2ebe7;border-top:1px solid #eadfd9"></div>
<div class="a" style="left:69px;top:231px;width:150px;height:30px;background:#fff;border-top:1px solid #eadfd9"></div>
<div class="a" style="left:67px;top:231px;width:2px;height:30px;background:#eadfd9"></div>
<div class="t" style="left:3.5px;top:239.0px;font-size:14px;color:#111">长</div>
<div class="t" style="left:72px;top:239.0px;font-size:14.2px;color:#111"><span class="n">480</span></div>
<div class="a" style="left:0;top:261px;width:67px;height:30px;background:#f2ebe7;border-top:1px solid #eadfd9"></div>
<div class="a" style="left:69px;top:261px;width:150px;height:30px;background:#f6f2ef;border-top:1px solid #eadfd9"></div>
<div class="a" style="left:67px;top:261px;width:2px;height:30px;background:#eadfd9"></div>
<div class="t" style="left:3.5px;top:269.0px;font-size:14px;color:#111">数量</div>
<div class="t" style="left:72px;top:269.0px;font-size:14.2px;color:#111"><span class="n">200</span></div>
<div class="a" style="left:0;top:290px;width:67px;height:30px;background:#f2ebe7;border-top:1px solid #eadfd9"></div>
<div class="a" style="left:69px;top:290px;width:150px;height:30px;background:#fff;border-top:1px solid #eadfd9"></div>
<div class="a" style="left:67px;top:290px;width:2px;height:30px;background:#eadfd9"></div>
<div class="t" style="left:3.5px;top:298.0px;font-size:14px;color:#111">单位</div>
<div class="a" style="left:0;top:319px;width:67px;height:30px;background:#f2ebe7;border-top:1px solid #eadfd9"></div>
<div class="a" style="left:69px;top:319px;width:150px;height:30px;background:#f6f2ef;border-top:1px solid #eadfd9"></div>
<div class="a" style="left:67px;top:319px;width:2px;height:30px;background:#eadfd9"></div>
<div class="t" style="left:3.5px;top:327.0px;font-size:14px;color:#111">单价</div>
<div class="t" style="left:72px;top:327.0px;font-size:14.2px;color:#111"><span class="n">1.2000</span></div>
<div class="a" style="left:0;top:348px;width:67px;height:30px;background:#f2ebe7;border-top:1px solid #eadfd9"></div>
<div class="a" style="left:69px;top:348px;width:150px;height:30px;background:#fff;border-top:1px solid #eadfd9"></div>
<div class="a" style="left:67px;top:348px;width:2px;height:30px;background:#eadfd9"></div>
<div class="t" style="left:3.5px;top:356.0px;font-size:14px;color:#111">小计</div>
<div class="t" style="left:72px;top:356.0px;font-size:14.2px;color:#111"><span class="n">240</span></div>
<div class="a" style="left:0;top:377px;width:67px;height:30px;background:#f2ebe7;border-top:1px solid #eadfd9"></div>
<div class="a" style="left:69px;top:377px;width:150px;height:30px;background:#f6f2ef;border-top:1px solid #eadfd9"></div>
<div class="a" style="left:67px;top:377px;width:2px;height:30px;background:#eadfd9"></div>
<div class="t" style="left:3.5px;top:385.0px;font-size:14px;color:#111">吨数</div>
<div class="t" style="left:72px;top:385.0px;font-size:14.2px;color:#111"><span class="n">0</span></div>
<div class="a" style="left:0;top:406px;width:67px;height:30px;background:#f2ebe7;border-top:1px solid #eadfd9"></div>
<div class="a" style="left:69px;top:406px;width:150px;height:30px;background:#fff;border-top:1px solid #eadfd9"></div>
<div class="a" style="left:67px;top:406px;width:2px;height:30px;background:#eadfd9"></div>
<div class="t" style="left:3.5px;top:414.0px;font-size:14px;color:#111">吨价</div>
<div class="t" style="left:72px;top:414.0px;font-size:14.2px;color:#111"><span class="n">1.8000</span></div>
<div class="a" style="left:0;top:435px;width:67px;height:30px;background:#f2ebe7;border-top:1px solid #eadfd9"></div>
<div class="a" style="left:69px;top:435px;width:150px;height:30px;background:#f6f2ef;border-top:1px solid #eadfd9"></div>
<div class="a" style="left:67px;top:435px;width:2px;height:30px;background:#eadfd9"></div>
<div class="t" style="left:3.5px;top:443.0px;font-size:14px;color:#111">说明</div>
<div class="a" style="left:0;top:464px;width:67px;height:30px;background:#f2ebe7;border-top:1px solid #eadfd9"></div>
<div class="a" style="left:69px;top:464px;width:150px;height:30px;background:#fff;border-top:1px solid #eadfd9"></div>
<div class="a" style="left:67px;top:464px;width:2px;height:30px;background:#eadfd9"></div>
<div class="t" style="left:3.5px;top:472.0px;font-size:14px;color:#111">需求日期</div>
<div class="t" style="left:72px;top:472.0px;font-size:14.2px;color:#111"><span class="n">2025-09-04</span></div>
<div class="a" style="left:0;top:493px;width:67px;height:30px;background:#f2ebe7;border-top:1px solid #eadfd9"></div>
<div class="a" style="left:69px;top:493px;width:150px;height:30px;background:#f6f2ef;border-top:1px solid #eadfd9"></div>
<div class="a" style="left:67px;top:493px;width:2px;height:30px;background:#eadfd9"></div>
<div class="t" style="left:3.5px;top:501.0px;font-size:14px;color:#111">急件</div>
<div class="t" style="left:72px;top:501.0px;font-size:14.2px;color:#111">否</div>
<div class="a" style="left:0;top:522px;width:67px;height:30px;background:#f2ebe7;border-top:1px solid #eadfd9"></div>
<div class="a" style="left:69px;top:522px;width:150px;height:30px;background:#fff;border-top:1px solid #eadfd9"></div>
<div class="a" style="left:67px;top:522px;width:2px;height:30px;background:#eadfd9"></div>
<div class="t" style="left:3.5px;top:530.0px;font-size:14px;color:#111">物料类别</div>
<div class="t" style="left:72px;top:530.0px;font-size:14.2px;color:#111">原材料</div>
<div class="a" style="left:0;top:551px;width:67px;height:30px;background:#f2ebe7;border-top:1px solid #eadfd9"></div>
<div class="a" style="left:69px;top:551px;width:150px;height:30px;background:#f6f2ef;border-top:1px solid #eadfd9"></div>
<div class="a" style="left:67px;top:551px;width:2px;height:30px;background:#eadfd9"></div>
<div class="t" style="left:3.5px;top:559.0px;font-size:14px;color:#111">工艺单号</div>
<div class="t" style="left:72px;top:559.0px;font-size:14.2px;color:#111"><span class="n">3000077</span></div>
<div class="a" style="left:0;top:580px;width:67px;height:30px;background:#f2ebe7;border-top:1px solid #eadfd9"></div>
<div class="a" style="left:69px;top:580px;width:150px;height:30px;background:#fff;border-top:1px solid #eadfd9"></div>
<div class="a" style="left:67px;top:580px;width:2px;height:30px;background:#eadfd9"></div>
<div class="t" style="left:3.5px;top:588.0px;font-size:14px;color:#111">发纸<span class="n">ID</span></div>
<div class="t" style="left:72px;top:588.0px;font-size:14.2px;color:#111"><span class="n">3000140</span></div>
</div>
<div class="a" style="left:1358px;top:99px;width:16px;height:601px;background:#f0f0f0"></div>
<div class="a" style="left:1359px;top:115px;width:14px;height:476px;background:#cdcdcd"></div>
<div class="a" style="left:1374px;top:99px;width:2px;height:601px;background:#b9b9b9"></div>
<div class="a" style="left:1139px;top:699px;width:237px;height:1px;background:#c9d0d8"></div>
<svg style="left:1361px;top:104px" width="10" height="8" viewBox="0 0 10 8"><path d="M1.5 5.5 L5 2 L8.5 5.5" fill="none" stroke="#555" stroke-width="1.5"/></svg>
<svg style="left:1361px;top:686px" width="10" height="8" viewBox="0 0 10 8"><path d="M1.5 2.5 L5 6 L8.5 2.5" fill="none" stroke="#555" stroke-width="1.5"/></svg>
<div class="a" style="left:190px;top:548px;width:948px;height:153px;background:#f5f0ed;border-top:1px solid #ede3dd"></div>
<div class="a" style="left:198px;top:556px;width:528px;height:135px;background:#faf8f7;border:1px solid #ebe2dc"></div>
<div class="a" style="left:730px;top:556px;width:402px;height:135px;background:#faf8f7;border:1px solid #ebe2dc"></div>
<div class="t" style="left:202.5px;top:563.0px;font-size:15.5px;color:#111">一</div>
<div class="t" style="left:202.5px;top:583.5px;font-size:15.5px;color:#111">周</div>
<div class="t" style="left:202.5px;top:604.0px;font-size:15.5px;color:#111">请</div>
<div class="t" style="left:202.5px;top:624.5px;font-size:15.5px;color:#111">购</div>
<div class="t" style="left:202.5px;top:645.0px;font-size:15.5px;color:#111">前</div>
<div class="t" style="left:202.5px;top:665.5px;font-size:15.5px;color:#111">十</div>
<div class="t" style="left:735px;top:565.9px;font-size:15.5px;color:#111">一</div>
<div class="t" style="left:735px;top:586.4px;font-size:15.5px;color:#111">周</div>
<div class="t" style="left:735px;top:606.9px;font-size:15.5px;color:#111">请</div>
<div class="t" style="left:735px;top:627.4px;font-size:15.5px;color:#111">购</div>
<div class="t" style="left:735px;top:647.9px;font-size:15.5px;color:#111">笔</div>
<div class="t" style="left:735px;top:668.4px;font-size:15.5px;color:#111">数</div>
<svg style="left:252.7px;top:576.15px" width="40.5" height="92.45" viewBox="0 0 40.5 92.45"><path d="M0 5 L5 0 L39.5 0 L34.5 5 Z" fill="#a01a4a"/><path d="M34.5 5 L39.5 0 L39.5 86.45 L34.5 91.45 Z" fill="#a01a4a"/></svg>
<div class="a" style="left:252.7px;top:581.15px;width:34.5px;height:86.45px;background:linear-gradient(90deg,#a01a4a 0%,#dc90a8 48%,#dc90a8 58%,#a01a4a 100%);box-shadow:inset -1px 0 0 rgba(255,255,255,0.35)"></div>
<div class="a" style="left:259.95px;top:581.15px;width:20px;height:18.5px;background:rgba(255,255,255,0.35)"></div>
<div class="t" style="left:254.95px;width:30px;text-align:center;top:581.75px;font-size:13.4px;color:#151515;transform:scaleX(0.86)">13</div>
<div class="t" style="left:229.95px;width:80px;text-align:center;top:674px;font-size:13.2px;color:#111;transform:rotate(10deg);transform-origin:50% 50%"><span style="font-size:13.8px">157</span>克大</div>
<svg style="left:301px;top:609.4px" width="40.5" height="59.2" viewBox="0 0 40.5 59.2"><path d="M0 5 L5 0 L39.5 0 L34.5 5 Z" fill="#3a10d0"/><path d="M34.5 5 L39.5 0 L39.5 53.2 L34.5 58.2 Z" fill="#3a10d0"/></svg>
<div class="a" style="left:301px;top:614.4px;width:34.5px;height:53.2px;background:linear-gradient(90deg,#3a10d0 0%,#a28ae8 48%,#a28ae8 58%,#3a10d0 100%);box-shadow:inset -1px 0 0 rgba(255,255,255,0.35)"></div>
<div class="a" style="left:312.0px;top:614.4px;width:12.5px;height:18.5px;background:rgba(255,255,255,0.35)"></div>
<div class="t" style="left:303.25px;width:30px;text-align:center;top:615.0px;font-size:13.4px;color:#151515;transform:scaleX(0.86)">8</div>
<div class="t" style="left:278.25px;width:80px;text-align:center;top:674px;font-size:13.2px;color:#111;transform:rotate(10deg);transform-origin:50% 50%"><span style="font-size:13.8px">250</span>克大</div>
<svg style="left:348.7px;top:616.0500000000001px" width="40.5" height="52.550000000000004" viewBox="0 0 40.5 52.550000000000004"><path d="M0 5 L5 0 L39.5 0 L34.5 5 Z" fill="#e8104a"/><path d="M34.5 5 L39.5 0 L39.5 46.550000000000004 L34.5 51.550000000000004 Z" fill="#e8104a"/></svg>
<div class="a" style="left:348.7px;top:621.0500000000001px;width:34.5px;height:46.550000000000004px;background:linear-gradient(90deg,#e8104a 0%,#f590aa 48%,#f590aa 58%,#e8104a 100%);box-shadow:inset -1px 0 0 rgba(255,255,255,0.35)"></div>
<div class="a" style="left:359.7px;top:621.0500000000001px;width:12.5px;height:18.5px;background:rgba(255,255,255,0.35)"></div>
<div class="t" style="left:350.95px;width:30px;text-align:center;top:621.6500000000001px;font-size:13.4px;color:#151515;transform:scaleX(0.86)">7</div>
<div class="t" style="left:325.95px;width:80px;text-align:center;top:674px;font-size:13.2px;color:#111;transform:rotate(10deg);transform-origin:50% 50%"><span style="font-size:13.8px">1111</span></div>
<svg style="left:396.8px;top:629.35px" width="40.5" height="39.25" viewBox="0 0 40.5 39.25"><path d="M0 5 L5 0 L39.5 0 L34.5 5 Z" fill="#1a8a92"/><path d="M34.5 5 L39.5 0 L39.5 33.25 L34.5 38.25 Z" fill="#1a8a92"/></svg>
<div class="a" style="left:396.8px;top:634.35px;width:34.5px;height:33.25px;background:linear-gradient(90deg,#1a8a92 0%,#90d0d4 48%,#90d0d4 58%,#1a8a92 100%);box-shadow:inset -1px 0 0 rgba(255,255,255,0.35)"></div>
<div class="a" style="left:407.8px;top:634.35px;width:12.5px;height:18.5px;background:rgba(255,255,255,0.35)"></div>
<div class="t" style="left:399.05px;width:30px;text-align:center;top:634.95px;font-size:13.4px;color:#151515;transform:scaleX(0.86)">5</div>
<div class="t" style="left:374.05px;width:80px;text-align:center;top:674px;font-size:13.2px;color:#111;transform:rotate(10deg);transform-origin:50% 50%">格底热溶</div>
<svg style="left:444.7px;top:636.0px" width="40.5" height="32.6" viewBox="0 0 40.5 32.6"><path d="M0 5 L5 0 L39.5 0 L34.5 5 Z" fill="#8a68a4"/><path d="M34.5 5 L39.5 0 L39.5 26.6 L34.5 31.6 Z" fill="#8a68a4"/></svg>
<div class="a" style="left:444.7px;top:641.0px;width:34.5px;height:26.6px;background:linear-gradient(90deg,#8a68a4 0%,#c8b0d8 48%,#c8b0d8 58%,#8a68a4 100%);box-shadow:inset -1px 0 0 rgba(255,255,255,0.35)"></div>
<div class="a" style="left:455.7px;top:641.0px;width:12.5px;height:18.5px;background:rgba(255,255,255,0.35)"></div>
<div class="t" style="left:446.95px;width:30px;text-align:center;top:641.6px;font-size:13.4px;color:#151515;transform:scaleX(0.86)">4</div>
<div class="t" style="left:421.95px;width:80px;text-align:center;top:674px;font-size:13.2px;color:#111;transform:rotate(10deg);transform-origin:50% 50%"><span style="font-size:13.8px">E</span>瓦</div>
<svg style="left:492.7px;top:636.0px" width="40.5" height="32.6" viewBox="0 0 40.5 32.6"><path d="M0 5 L5 0 L39.5 0 L34.5 5 Z" fill="#ae98a0"/><path d="M34.5 5 L39.5 0 L39.5 26.6 L34.5 31.6 Z" fill="#ae98a0"/></svg>
<div class="a" style="left:492.7px;top:641.0px;width:34.5px;height:26.6px;background:linear-gradient(90deg,#ae98a0 0%,#dccdd2 48%,#dccdd2 58%,#ae98a0 100%);box-shadow:inset -1px 0 0 rgba(255,255,255,0.35)"></div>
<div class="a" style="left:503.7px;top:641.0px;width:12.5px;height:18.5px;background:rgba(255,255,255,0.35)"></div>
<div class="t" style="left:494.95px;width:30px;text-align:center;top:641.6px;font-size:13.4px;color:#151515;transform:scaleX(0.86)">4</div>
<div class="t" style="left:469.95px;width:80px;text-align:center;top:674px;font-size:13.2px;color:#111;transform:rotate(10deg);transform-origin:50% 50%">大度<span style="font-size:13.8px">65G</span></div>
<svg style="left:540.6px;top:636.0px" width="40.5" height="32.6" viewBox="0 0 40.5 32.6"><path d="M0 5 L5 0 L39.5 0 L34.5 5 Z" fill="#5a7caa"/><path d="M34.5 5 L39.5 0 L39.5 26.6 L34.5 31.6 Z" fill="#5a7caa"/></svg>
<div class="a" style="left:540.6px;top:641.0px;width:34.5px;height:26.6px;background:linear-gradient(90deg,#5a7caa 0%,#b0c4dc 48%,#b0c4dc 58%,#5a7caa 100%);box-shadow:inset -1px 0 0 rgba(255,255,255,0.35)"></div>
<div class="a" style="left:551.6px;top:641.0px;width:12.5px;height:18.5px;background:rgba(255,255,255,0.35)"></div>
<div class="t" style="left:542.85px;width:30px;text-align:center;top:641.6px;font-size:13.4px;color:#151515;transform:scaleX(0.86)">4</div>
<div class="t" style="left:517.85px;width:80px;text-align:center;top:674px;font-size:13.2px;color:#111;transform:rotate(10deg);transform-origin:50% 50%">大度<span style="font-size:13.8px">80G</span></div>
<svg style="left:588.6px;top:642.65px" width="40.5" height="25.950000000000003" viewBox="0 0 40.5 25.950000000000003"><path d="M0 5 L5 0 L39.5 0 L34.5 5 Z" fill="#6a2898"/><path d="M34.5 5 L39.5 0 L39.5 19.950000000000003 L34.5 24.950000000000003 Z" fill="#6a2898"/></svg>
<div class="a" style="left:588.6px;top:647.65px;width:34.5px;height:19.950000000000003px;background:linear-gradient(90deg,#6a2898 0%,#c0a0d8 48%,#c0a0d8 58%,#6a2898 100%);box-shadow:inset -1px 0 0 rgba(255,255,255,0.35)"></div>
<div class="a" style="left:599.6px;top:647.65px;width:12.5px;height:18.5px;background:rgba(255,255,255,0.35)"></div>
<div class="t" style="left:590.85px;width:30px;text-align:center;top:648.25px;font-size:13.4px;color:#151515;transform:scaleX(0.86)">3</div>
<div class="t" style="left:565.85px;width:80px;text-align:center;top:674px;font-size:13.2px;color:#111;transform:rotate(10deg);transform-origin:50% 50%"><span style="font-size:13.8px">2.0</span>双面</div>
<svg style="left:636px;top:649.3000000000001px" width="40.5" height="19.3" viewBox="0 0 40.5 19.3"><path d="M0 5 L5 0 L39.5 0 L34.5 5 Z" fill="#98b0a8"/><path d="M34.5 5 L39.5 0 L39.5 13.3 L34.5 18.3 Z" fill="#98b0a8"/></svg>
<div class="a" style="left:636px;top:654.3000000000001px;width:34.5px;height:13.3px;background:linear-gradient(90deg,#98b0a8 0%,#d8e6e0 48%,#d8e6e0 58%,#98b0a8 100%);box-shadow:inset -1px 0 0 rgba(255,255,255,0.35)"></div>
<div class="a" style="left:647.0px;top:654.3000000000001px;width:12.5px;height:13.3px;background:rgba(255,255,255,0.35)"></div>
<div class="t" style="left:638.25px;width:30px;text-align:center;top:654.9000000000001px;font-size:13.4px;color:#151515;transform:scaleX(0.86)">2</div>
<div class="t" style="left:613.25px;width:80px;text-align:center;top:674px;font-size:13.2px;color:#111;transform:rotate(10deg);transform-origin:50% 50%">光面铜板</div>
<svg style="left:684.5px;top:649.3000000000001px" width="40.5" height="19.3" viewBox="0 0 40.5 19.3"><path d="M0 5 L5 0 L39.5 0 L34.5 5 Z" fill="#5cc050"/><path d="M34.5 5 L39.5 0 L39.5 13.3 L34.5 18.3 Z" fill="#5cc050"/></svg>
<div class="a" style="left:684.5px;top:654.3000000000001px;width:34.5px;height:13.3px;background:linear-gradient(90deg,#5cc050 0%,#a8e8a0 48%,#a8e8a0 58%,#5cc050 100%);box-shadow:inset -1px 0 0 rgba(255,255,255,0.35)"></div>
<div class="a" style="left:695.5px;top:654.3000000000001px;width:12.5px;height:13.3px;background:rgba(255,255,255,0.35)"></div>
<div class="t" style="left:686.75px;width:30px;text-align:center;top:654.9000000000001px;font-size:13.4px;color:#151515;transform:scaleX(0.86)">2</div>
<svg style="left:773.8px;top:617.46px" width="43" height="50.64" viewBox="0 0 43 50.64"><path d="M0 5 L5 0 L42 0 L37 5 Z" fill="#9840b0"/><path d="M37 5 L42 0 L42 44.64 L37 49.64 Z" fill="#9840b0"/></svg>
<div class="a" style="left:773.8px;top:622.46px;width:37px;height:44.64px;background:linear-gradient(90deg,#9840b0 0%,#dca8e8 48%,#dca8e8 58%,#9840b0 100%);box-shadow:inset -1px 0 0 rgba(255,255,255,0.35)"></div>
<div class="a" style="left:786.05px;top:622.46px;width:12.5px;height:18.5px;background:rgba(255,255,255,0.35)"></div>
<div class="t" style="left:777.3px;width:30px;text-align:center;top:623.0600000000001px;font-size:13.4px;color:#151515;transform:scaleX(0.86)">9</div>
<div class="t" style="left:762.3px;width:60px;text-align:center;top:674.5px;font-size:13.4px;color:#111">周五</div>
<svg style="left:824.4px;top:582.74px" width="43" height="85.36" viewBox="0 0 43 85.36"><path d="M0 5 L5 0 L42 0 L37 5 Z" fill="#18d040"/><path d="M37 5 L42 0 L42 79.36 L37 84.36 Z" fill="#18d040"/></svg>
<div class="a" style="left:824.4px;top:587.74px;width:37px;height:79.36px;background:linear-gradient(90deg,#18d040 0%,#98f4a8 48%,#98f4a8 58%,#18d040 100%);box-shadow:inset -1px 0 0 rgba(255,255,255,0.35)"></div>
<div class="a" style="left:832.9px;top:587.74px;width:20px;height:18.5px;background:rgba(255,255,255,0.35)"></div>
<div class="t" style="left:827.9px;width:30px;text-align:center;top:588.34px;font-size:13.4px;color:#151515;transform:scaleX(0.86)">16</div>
<div class="t" style="left:812.9px;width:60px;text-align:center;top:674.5px;font-size:13.4px;color:#111">周六</div>
<svg style="left:875.2px;top:627.38px" width="43" height="40.72" viewBox="0 0 43 40.72"><path d="M0 5 L5 0 L42 0 L37 5 Z" fill="#a06c40"/><path d="M37 5 L42 0 L42 34.72 L37 39.72 Z" fill="#a06c40"/></svg>
<div class="a" style="left:875.2px;top:632.38px;width:37px;height:34.72px;background:linear-gradient(90deg,#a06c40 0%,#dcc0a0 48%,#dcc0a0 58%,#a06c40 100%);box-shadow:inset -1px 0 0 rgba(255,255,255,0.35)"></div>
<div class="a" style="left:887.45px;top:632.38px;width:12.5px;height:18.5px;background:rgba(255,255,255,0.35)"></div>
<div class="t" style="left:878.7px;width:30px;text-align:center;top:632.98px;font-size:13.4px;color:#151515;transform:scaleX(0.86)">7</div>
<div class="t" style="left:863.7px;width:60px;text-align:center;top:674.5px;font-size:13.4px;color:#111">周日</div>
<svg style="left:926.1px;top:637.3000000000001px" width="43" height="30.8" viewBox="0 0 43 30.8"><path d="M0 5 L5 0 L42 0 L37 5 Z" fill="#a00c50"/><path d="M37 5 L42 0 L42 24.8 L37 29.8 Z" fill="#a00c50"/></svg>
<div class="a" style="left:926.1px;top:642.3000000000001px;width:37px;height:24.8px;background:linear-gradient(90deg,#a00c50 0%,#e088b8 48%,#e088b8 58%,#a00c50 100%);box-shadow:inset -1px 0 0 rgba(255,255,255,0.35)"></div>
<div class="a" style="left:938.35px;top:642.3000000000001px;width:12.5px;height:18.5px;background:rgba(255,255,255,0.35)"></div>
<div class="t" style="left:929.6px;width:30px;text-align:center;top:642.9000000000001px;font-size:13.4px;color:#151515;transform:scaleX(0.86)">5</div>
<div class="t" style="left:914.6px;width:60px;text-align:center;top:674.5px;font-size:13.4px;color:#111">周一</div>
<svg style="left:976.4px;top:607.54px" width="43" height="60.56" viewBox="0 0 43 60.56"><path d="M0 5 L5 0 L42 0 L37 5 Z" fill="#9048e0"/><path d="M37 5 L42 0 L42 54.56 L37 59.56 Z" fill="#9048e0"/></svg>
<div class="a" style="left:976.4px;top:612.54px;width:37px;height:54.56px;background:linear-gradient(90deg,#9048e0 0%,#d8b0f4 48%,#d8b0f4 58%,#9048e0 100%);box-shadow:inset -1px 0 0 rgba(255,255,255,0.35)"></div>
<div class="a" style="left:984.9px;top:612.54px;width:20px;height:18.5px;background:rgba(255,255,255,0.35)"></div>
<div class="t" style="left:979.9px;width:30px;text-align:center;top:613.14px;font-size:13.4px;color:#151515;transform:scaleX(0.86)">11</div>
<div class="t" style="left:964.9px;width:60px;text-align:center;top:674.5px;font-size:13.4px;color:#111">周二</div>
<svg style="left:1027.2px;top:632.34px" width="43" height="35.76" viewBox="0 0 43 35.76"><path d="M0 5 L5 0 L42 0 L37 5 Z" fill="#688810"/><path d="M37 5 L42 0 L42 29.759999999999998 L37 34.76 Z" fill="#688810"/></svg>
<div class="a" style="left:1027.2px;top:637.34px;width:37px;height:29.759999999999998px;background:linear-gradient(90deg,#688810 0%,#b4cc78 48%,#b4cc78 58%,#688810 100%);box-shadow:inset -1px 0 0 rgba(255,255,255,0.35)"></div>
<div class="a" style="left:1039.45px;top:637.34px;width:12.5px;height:18.5px;background:rgba(255,255,255,0.35)"></div>
<div class="t" style="left:1030.7px;width:30px;text-align:center;top:637.94px;font-size:13.4px;color:#151515;transform:scaleX(0.86)">6</div>
<div class="t" style="left:1015.7px;width:60px;text-align:center;top:674.5px;font-size:13.4px;color:#111">周三</div>
<svg style="left:1078px;top:612.5px" width="43" height="55.6" viewBox="0 0 43 55.6"><path d="M0 5 L5 0 L42 0 L37 5 Z" fill="#384010"/><path d="M37 5 L42 0 L42 49.6 L37 54.6 Z" fill="#384010"/></svg>
<div class="a" style="left:1078px;top:617.5px;width:37px;height:49.6px;background:linear-gradient(90deg,#384010 0%,#a8aa98 48%,#a8aa98 58%,#384010 100%);box-shadow:inset -1px 0 0 rgba(255,255,255,0.35)"></div>
<div class="a" style="left:1086.5px;top:617.5px;width:20px;height:18.5px;background:rgba(255,255,255,0.35)"></div>
<div class="t" style="left:1081.5px;width:30px;text-align:center;top:618.1px;font-size:13.4px;color:#151515;transform:scaleX(0.86)">10</div>
<div class="t" style="left:1066.5px;width:60px;text-align:center;top:674.5px;font-size:13.4px;color:#111">今天</div>
<div class="a" style="left:0;top:701px;width:1376px;height:29px;background:#7d5944;border-top:1px solid #6c4630"></div>
<div class="t" style="left:16px;top:706.2px;font-size:14.4px;color:#fff">总笔数<span class="fc">:</span><span class="n" style="font-size:15px">64</span> 笔</div>
<div class="t" style="left:240.5px;top:706.2px;font-size:14.4px;color:#fff">总数量<span class="fc">:</span><span class="n" style="font-size:15px">261,395.12</span></div>
<div class="t" style="left:465px;top:706.2px;font-size:14.4px;color:#fff">未确认<span class="fc">:</span><span class="n" style="font-size:15px">64</span> 笔</div>
<div class="t" style="left:689px;top:706.2px;font-size:14.4px;color:#fff">总金额<span class="fc">:</span><span class="n" style="font-size:15px">17.35</span> 万</div>
<div class="t" style="left:979.5px;top:708.3px;font-size:14.6px;color:#fff">每页</div>
<div class="a" style="left:1012px;top:701px;width:48px;height:27px;background:#fbf9f8;border:1px solid #e9e1dc"></div>
<div class="t" style="left:1015.5px;top:708px;font-size:15px;color:#111"><span class="n">30</span></div>
<div class="a" style="left:1045px;top:704px;width:13px;height:10px;background:#f0f0f0;border:1px solid #bbb"></div>
<div class="a" style="left:1045px;top:715px;width:13px;height:10px;background:#f0f0f0;border:1px solid #bbb"></div>
<svg style="left:1047px;top:705px" width="9" height="8" viewBox="0 0 9 8"><path d="M2 5 L4.5 2.5 L7 5" fill="none" stroke="#222" stroke-width="1.2"/></svg>
<svg style="left:1047px;top:716px" width="9" height="8" viewBox="0 0 9 8"><path d="M2 3 L4.5 5.5 L7 3" fill="none" stroke="#222" stroke-width="1.2"/></svg>
<div class="t" style="left:1065px;top:708px;font-size:15px;color:#fff">行</div>
<svg style="left:1094px;top:709px" width="24" height="16" viewBox="0 0 24 16">
<path d="M6 3.5 V12.2 H13.4" fill="none" stroke="#fff" stroke-width="2.4"/>
<path d="M2 6.2 L6 1.6 L10 6.2 Z" fill="#fff"/>
<path d="M10 2.8 H17.2 V10" fill="none" stroke="#fff" stroke-width="2.4"/>
<path d="M13.2 8.6 L17.2 13.2 L21.2 8.6 Z" fill="#fff"/>
</svg>
<svg style="left:1134px;top:709px" width="13" height="12" viewBox="0 0 13 12"><path d="M6 1.5 L1.8 6 L6 10.5 M11.5 1.5 L7.3 6 L11.5 10.5" fill="none" stroke="#fff" stroke-width="2.2"/></svg>
<div class="a" style="left:1153px;top:704.5px;width:111px;height:21px;background:#faf8f7"></div>
<div class="t" style="left:1153px;width:111px;text-align:center;top:708.5px;font-size:14px;color:#111">1/3/64</div>
<svg style="left:1270px;top:709px" width="13" height="12" viewBox="0 0 13 12"><path d="M1.5 1.5 L5.7 6 L1.5 10.5 M7 1.5 L11.2 6 L7 10.5" fill="none" stroke="#fff" stroke-width="2.2"/></svg>
<div class="a" style="left:1302px;top:708.5px;width:12px;height:12px;background:#fff;border:1px solid #444"></div>
<div class="t" style="left:1317.8px;top:709.3px;font-size:14.3px;color:#fff">不分页</div>
<div class="a" style="left:0;top:756px;width:1376px;height:2px;background:#1f2c38"></div>
</body></html>
